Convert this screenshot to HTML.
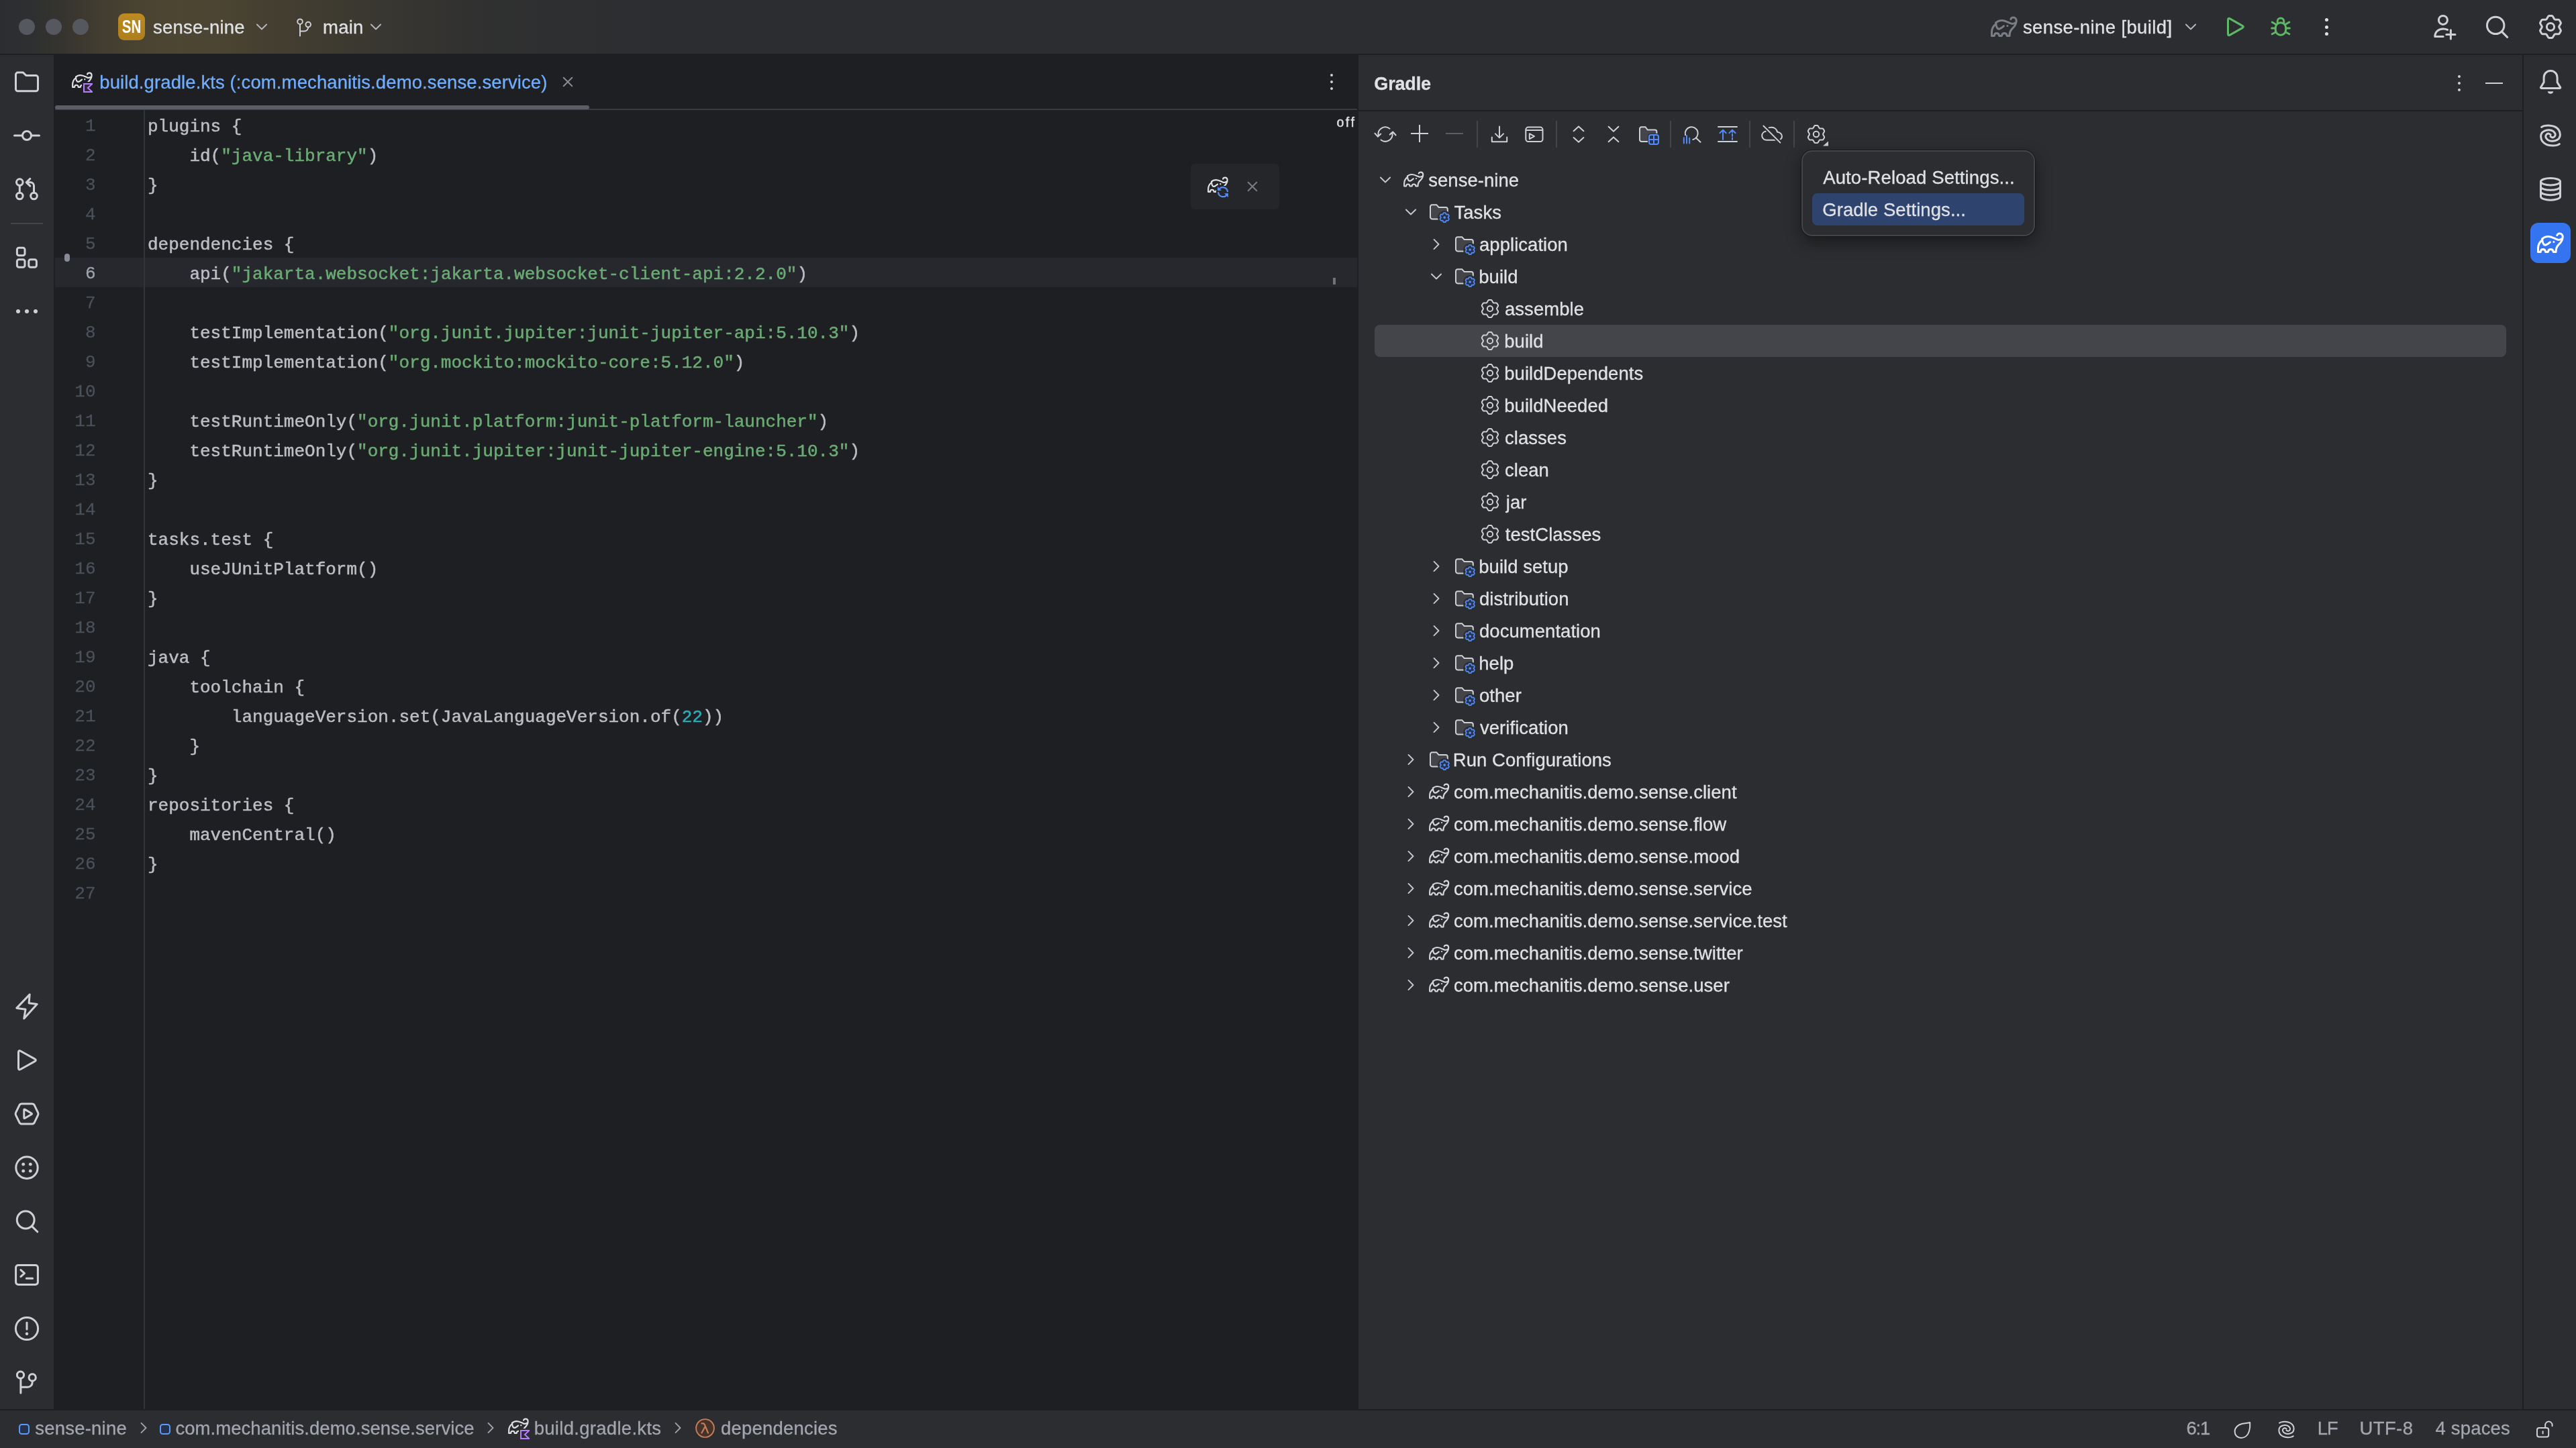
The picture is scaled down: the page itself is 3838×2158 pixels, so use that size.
<!DOCTYPE html><html><head><meta charset="utf-8"><title>sense-nine</title><style>
*{margin:0;padding:0;box-sizing:border-box}
html,body{width:3838px;height:2158px;overflow:hidden;background:#1E1F22;}
body{position:relative;will-change:transform;font-family:"Liberation Sans",sans-serif;font-size:27.5px;letter-spacing:.1px;-webkit-text-stroke:.3px;color:#DFE1E5;}
.a{position:absolute}
.t{position:absolute;white-space:pre;line-height:40px;height:40px}
svg{position:absolute;overflow:visible}
.code{-webkit-text-stroke:.5px;position:absolute;left:220px;white-space:pre;font-family:"Liberation Mono",monospace;font-size:26px;letter-spacing:0;line-height:44px;height:44px;color:#BCBEC4}
.ln{position:absolute;left:82px;width:60.5px;text-align:right;font-family:"Liberation Mono",monospace;font-size:26px;letter-spacing:0;line-height:44px;height:44px;color:#4B5059}
.s{color:#6AAB73} .n{color:#2AACB8}
.st{color:#A8ADBD}
</style></head><body><div class="a" style="left:0;top:0;width:3838px;height:80px;background:linear-gradient(90deg,#2B2D30 0px,#2E2F30 50px,#37352F 100px,#423D30 150px,#4A4331 210px,#4D4632 270px,#4B4432 330px,#453F31 400px,#3D3A30 505px,#363530 605px,#313130 705px,#2E2F30 807px,#2C2E30 908px,#2B2D30 1000px)"></div>
<div class="a" style="left:0px;top:82px;width:80px;height:2018px;background:#2B2D30;"></div>
<div class="a" style="left:2024px;top:82px;width:1734px;height:2018px;background:#2B2D30;"></div>
<div class="a" style="left:3760px;top:82px;width:78px;height:2018px;background:#2B2D30;"></div>
<div class="a" style="left:0px;top:2102px;width:3838px;height:56px;background:#2B2D30;"></div>
<div class="a" style="left:82px;top:162px;width:1940px;height:2px;background:#393B40;"></div>
<div class="a" style="left:2024px;top:164px;width:1734px;height:2px;background:#1E1F22;"></div>
<div class="a" style="left:82px;top:157px;width:796px;height:6px;background:#5A5D63;border-radius:3px"></div>
<div class="a" style="left:214px;top:164px;width:2px;height:1936px;background:#313438;"></div>
<div class="a" style="left:82px;top:384px;width:1940px;height:44px;background:#26282E;"></div>
<div class="a" style="left:214px;top:384px;width:2px;height:44px;background:#313438;"></div>
<div class="a" style="left:96px;top:378px;width:8px;height:12px;background:#878B95;border-radius:4px"></div>
<div class="a" style="left:1986px;top:414px;width:4px;height:10px;background:#6F737A;"></div>
<div class="a" style="left:28px;top:28px;width:24px;height:24px;background:#56585F;border-radius:12px"></div>
<div class="a" style="left:68px;top:28px;width:24px;height:24px;background:#56585F;border-radius:12px"></div>
<div class="a" style="left:108px;top:28px;width:24px;height:24px;background:#56585F;border-radius:12px"></div>
<div class="a" style="left:176px;top:20px;width:40px;height:40px;border-radius:9px;background:linear-gradient(180deg,#BD8B22,#AE7E1C)"></div>
<div class="t" style="left:176px;top:20px;width:40px;text-align:center;font-size:27px;font-weight:bold;letter-spacing:0;line-height:41px;color:#fff;-webkit-text-stroke:0;transform:scaleX(.76)">SN</div>
<div class="t" style="left:228.05px;top:20.87px;letter-spacing:0.228px;">sense-nine</div>
<svg style="left:380px;top:30.299999999999997px" width="20" height="20" viewBox="0 0 20 20" fill="none"><path d="M2.9 6.5L10 13.5L17.1 6.5" stroke="#B4B8BF" stroke-width="1.9" stroke-linecap="round" stroke-linejoin="round"/></svg>
<svg style="left:437.0px;top:24.0px;" width="32" height="32" viewBox="0 0 16 16" fill="none"><circle cx="5" cy="4.1" r="1.9" stroke="#CED0D6" stroke-width="1"/><circle cx="11.1" cy="6.3" r="1.9" stroke="#CED0D6" stroke-width="1"/><path d="M5 6V14.75M5 11.3H8.1C9.8 11.3 11.1 10 11.1 8.3V8.2" stroke="#CED0D6" stroke-width="1" stroke-linecap="round"/></svg>
<div class="t" style="left:481.05px;top:20.87px;letter-spacing:0.233px;">main</div>
<svg style="left:550px;top:30.299999999999997px" width="20" height="20" viewBox="0 0 20 20" fill="none"><path d="M2.9 6.5L10 13.5L17.1 6.5" stroke="#B4B8BF" stroke-width="1.9" stroke-linecap="round" stroke-linejoin="round"/></svg>
<svg style="left:2966.0px;top:20.0px;" width="40" height="40" viewBox="0 0 20 20" fill="none"><path d="M14.9 4.3C15.1 3.5 16 3 16.9 3C18.2 3 19.1 4 19.1 5.5C19.1 8 17.9 9.6 16.2 11.2C14.8 12.5 14 14 14 16.7H12.1C12 15.5 11.2 14.7 10.15 14.7C9.1 14.7 8.3 15.5 8.2 16.7H6.3C6.2 15.5 5.4 14.7 4.35 14.7C3.3 14.7 2.7 15.5 2.65 16.7H0.75V14C0.75 11.6 1.9 9.4 3.7 7.9" stroke="#7A7D84" stroke-width="1.5" stroke-linecap="round" stroke-linejoin="round" /><path d="M3.9 6.9C5 5.8 6.6 5.2 8.3 5.2C10.5 5.2 12.4 6.3 14.3 7.2C15.6 7.8 17 8 18.1 7" stroke="#7A7D84" stroke-width="1.5" stroke-linecap="round" stroke-linejoin="round" /><path d="M3.9 6.9C3.9 8.2 4.1 9.6 4.6 10.5C5 11.3 5.7 11.7 6.5 11.5C7.6 11.2 8.7 10.3 9.7 9.4" stroke="#7A7D84" stroke-width="1.5" stroke-linecap="round" stroke-linejoin="round" /><circle cx="12.45" cy="9.2" r="0.75" fill="#7A7D84"/></svg>
<div class="t" style="left:3013.95px;top:20.87px;letter-spacing:0.388px;">sense-nine [build]</div>
<svg style="left:3254px;top:30.299999999999997px" width="20" height="20" viewBox="0 0 20 20" fill="none"><path d="M2.9 6.5L10 13.5L17.1 6.5" stroke="#B4B8BF" stroke-width="1.9" stroke-linecap="round" stroke-linejoin="round"/></svg>
<svg style="left:3310.0px;top:20.0px;" width="40" height="40" viewBox="0 0 20 20" fill="none"><path d="M4.75 4.76Q4.75 3.10 6.21 3.93L15.44 9.17Q16.90 10.00 15.44 10.83L6.21 16.07Q4.75 16.90 4.75 15.24Z" stroke="#5FB865" stroke-width="1.5" stroke-linecap="round" stroke-linejoin="round" /></svg>
<svg style="left:3378.0px;top:20.0px;" width="40" height="40" viewBox="0 0 20 20" fill="none"><path d="M7.6 6.9V5.85A2.4 2.4 0 0 1 12.4 5.85V6.9" stroke="#5FB865" stroke-width="1.5" stroke-linecap="round" stroke-linejoin="round" /><rect x="6.15" y="6.9" width="7.7" height="9.2" rx="3.85" stroke="#5FB865" stroke-width="1.5"/><path d="M3.3 11H6M14 11H16.7M3.6 6.5L6.4 8.1M16.4 6.5L13.6 8.1M3.6 15.4L6.4 13.9M16.4 15.4L13.6 13.9" stroke="#5FB865" stroke-width="1.5" stroke-linecap="round" stroke-linejoin="round" /></svg>
<div class="a" style="left:3463.5px;top:26.8px;width:5.0px;height:5.0px;background:#DFE1E5;border-radius:2.5px"></div>
<div class="a" style="left:3463.5px;top:37.5px;width:5.0px;height:5.0px;background:#DFE1E5;border-radius:2.5px"></div>
<div class="a" style="left:3463.5px;top:48.2px;width:5.0px;height:5.0px;background:#DFE1E5;border-radius:2.5px"></div>
<svg style="left:3620.0px;top:20.0px;" width="40" height="40" viewBox="0 0 20 20" fill="none"><circle cx="9.95" cy="4.95" r="3.25" stroke="#CED0D6" stroke-width="1.5"/><path d="M13.3 12.2C12.3 11.7 11.2 11.45 10 11.45C6.6 11.45 3.9 13.9 3.9 17.3H10.1" stroke="#CED0D6" stroke-width="1.5" stroke-linecap="round" stroke-linejoin="round" /><path d="M15.7 12.4V19M12.4 15.7H19" stroke="#CED0D6" stroke-width="1.5" stroke-linecap="round" stroke-linejoin="round" /></svg>
<svg style="left:3700.0px;top:20.0px;" width="40" height="40" viewBox="0 0 20 20" fill="none"><circle cx="9.1" cy="8.95" r="6.35" stroke="#CED0D6" stroke-width="1.5"/><path d="M13.8 13.7L17.8 17.7" stroke="#CED0D6" stroke-width="1.5" stroke-linecap="round" stroke-linejoin="round" /></svg>
<svg style="left:3780.0px;top:20.0px;" width="40" height="40" viewBox="0 0 20 20" fill="none"><path d="M8.27 2.26Q8.55 1.78 9.04 1.78L10.96 1.78Q11.45 1.78 11.73 2.26L12.82 4.15Q13.10 4.63 13.66 4.63L15.84 4.63Q16.40 4.63 16.64 5.06L17.60 6.72Q17.85 7.14 17.57 7.63L16.48 9.51Q16.20 10.00 16.48 10.49L17.57 12.37Q17.85 12.86 17.60 13.28L16.64 14.94Q16.40 15.37 15.84 15.37L13.66 15.37Q13.10 15.37 12.82 15.85L11.73 17.74Q11.45 18.22 10.96 18.22L9.04 18.22Q8.55 18.22 8.27 17.74L7.18 15.85Q6.90 15.37 6.34 15.37L4.16 15.37Q3.60 15.37 3.36 14.94L2.40 13.28Q2.15 12.86 2.43 12.37L3.52 10.49Q3.80 10.00 3.52 9.51L2.43 7.63Q2.15 7.14 2.40 6.72L3.36 5.06Q3.60 4.63 4.16 4.63L6.34 4.63Q6.90 4.63 7.18 4.15Z" stroke="#CED0D6" stroke-width="1.5" stroke-linecap="round" stroke-linejoin="round" /><circle cx="10" cy="10" r="2.8" stroke="#CED0D6" stroke-width="1.5"/></svg>
<svg style="left:20.0px;top:102.0px;" width="40" height="40" viewBox="0 0 20 20" fill="none"><path d="M3.25 3.05H7.2L9.55 5.3H16.75A1.5 1.5 0 0 1 18.25 6.8V15.35A1.5 1.5 0 0 1 16.75 16.85H3.25A1.5 1.5 0 0 1 1.75 15.35V4.55A1.5 1.5 0 0 1 3.25 3.05Z" stroke="#CED0D6" stroke-width="1.5" stroke-linecap="round" stroke-linejoin="round" /></svg>
<svg style="left:20.0px;top:182.0px;" width="40" height="40" viewBox="0 0 20 20" fill="none"><circle cx="10" cy="10" r="3.25" stroke="#CED0D6" stroke-width="1.5"/><path d="M0.75 10H6.6M13.4 10H19.25" stroke="#CED0D6" stroke-width="1.5" stroke-linecap="round" stroke-linejoin="round" /></svg>
<svg style="left:20.0px;top:262.0px;" width="40" height="40" viewBox="0 0 20 20" fill="none"><circle cx="4.65" cy="4.8" r="2.4" stroke="#CED0D6" stroke-width="1.5"/><circle cx="4.65" cy="15" r="2.4" stroke="#CED0D6" stroke-width="1.5"/><circle cx="15.25" cy="15" r="2.4" stroke="#CED0D6" stroke-width="1.5"/><path d="M4.65 7.2V12.6M15.25 12.6V7.4A2.5 2.5 0 0 0 12.75 4.9H9.9M12.4 2.2L9.6 4.9L12.4 7.6" stroke="#CED0D6" stroke-width="1.5" stroke-linecap="round" stroke-linejoin="round" /></svg>
<div class="a" style="left:16px;top:332px;width:48px;height:2px;background:#43454A;"></div>
<svg style="left:20.0px;top:364.0px;" width="40" height="40" viewBox="0 0 20 20" fill="none"><rect x="2.7" y="2.65" width="5.8" height="5.7" rx="1.4" stroke="#CED0D6" stroke-width="1.5"/><rect x="2.7" y="11.4" width="5.8" height="5.7" rx="1.4" stroke="#CED0D6" stroke-width="1.5"/><rect x="11.4" y="11.4" width="5.8" height="5.7" rx="1.4" stroke="#CED0D6" stroke-width="1.5"/></svg>
<div class="a" style="left:23.8px;top:460.8px;width:6.4px;height:6.4px;background:#CED0D6;border-radius:3.2px"></div>
<div class="a" style="left:36.8px;top:460.8px;width:6.4px;height:6.4px;background:#CED0D6;border-radius:3.2px"></div>
<div class="a" style="left:49.8px;top:460.8px;width:6.4px;height:6.4px;background:#CED0D6;border-radius:3.2px"></div>
<svg style="left:20.0px;top:1480.0px;" width="40" height="40" viewBox="0 0 20 20" fill="none"><path d="M12.1 1.05L2.4 11.2L9 12.1L7.9 18.95L17.6 8.25L11.55 7.45Z" stroke="#CED0D6" stroke-width="1.5" stroke-linecap="round" stroke-linejoin="round" /></svg>
<svg style="left:20.0px;top:1560.0px;" width="40" height="40" viewBox="0 0 20 20" fill="none"><path d="M3.75 4.15Q3.75 2.30 5.40 3.22L15.85 9.08Q17.50 10.00 15.85 10.92L5.40 16.78Q3.75 17.70 3.75 15.85Z" stroke="#CED0D6" stroke-width="1.5" stroke-linecap="round" stroke-linejoin="round" /></svg>
<svg style="left:20.0px;top:1640.0px;" width="40" height="40" viewBox="0 0 20 20" fill="none"><path d="M1.78 10.97Q1.30 10.00 1.78 9.03L4.52 3.48Q5.00 2.50 6.31 2.50L13.79 2.50Q15.10 2.50 15.57 3.48L18.28 9.03Q18.75 10.00 18.28 10.97L15.57 16.52Q15.10 17.50 13.79 17.50L6.31 17.50Q5.00 17.50 4.52 16.52Z" stroke="#CED0D6" stroke-width="1.5" stroke-linecap="round" stroke-linejoin="round" /><path d="M7.90 7.08Q7.90 6.35 8.52 6.71L13.48 9.63Q14.10 10.00 13.48 10.37L8.52 13.29Q7.90 13.65 7.90 12.92Z" stroke="#CED0D6" stroke-width="1.5" stroke-linecap="round" stroke-linejoin="round" /></svg>
<svg style="left:20.0px;top:1720.0px;" width="40" height="40" viewBox="0 0 20 20" fill="none"><circle cx="10" cy="10.1" r="8.1" stroke="#CED0D6" stroke-width="1.5"/><circle cx="7.35" cy="7.6" r="1.2" fill="#CED0D6"/><circle cx="7.35" cy="12.6" r="1.2" fill="#CED0D6"/><circle cx="12.65" cy="7.6" r="1.2" fill="#CED0D6"/><circle cx="12.65" cy="12.6" r="1.2" fill="#CED0D6"/></svg>
<svg style="left:20.0px;top:1800.0px;" width="40" height="40" viewBox="0 0 20 20" fill="none"><circle cx="9.1" cy="9" r="6.45" stroke="#CED0D6" stroke-width="1.5"/><path d="M13.8 13.8L17.9 17.9" stroke="#CED0D6" stroke-width="1.5" stroke-linecap="round" stroke-linejoin="round" /></svg>
<svg style="left:20.0px;top:1880.0px;" width="40" height="40" viewBox="0 0 20 20" fill="none"><rect x="1.8" y="2.7" width="16.4" height="14.5" rx="1.8" stroke="#CED0D6" stroke-width="1.5"/><path d="M5.45 6.35L8.25 8.8L5.45 11.3M9.65 12.65H14.3" stroke="#CED0D6" stroke-width="1.5" stroke-linecap="round" stroke-linejoin="round" /></svg>
<svg style="left:20.0px;top:1960.0px;" width="40" height="40" viewBox="0 0 20 20" fill="none"><circle cx="10" cy="10" r="8.3" stroke="#CED0D6" stroke-width="1.5"/><path d="M10 5.6V10.5" stroke="#CED0D6" stroke-width="1.5" stroke-linecap="round" stroke-linejoin="round" /><circle cx="10" cy="13.85" r="1.1" fill="#CED0D6"/></svg>
<svg style="left:20.0px;top:2040.0px;" width="40" height="40" viewBox="0 0 20 20" fill="none"><circle cx="5.25" cy="4.6" r="2.55" stroke="#CED0D6" stroke-width="1.5"/><circle cx="14.1" cy="6.45" r="2.55" stroke="#CED0D6" stroke-width="1.5"/><path d="M5.45 7.3V18.05M5.45 13.6H10.6C12.5 13.6 14.1 12.1 14.1 10.1V9.1" stroke="#CED0D6" stroke-width="1.5" stroke-linecap="round" stroke-linejoin="round" /></svg>
<svg style="left:3780.0px;top:102.0px;" width="40" height="40" viewBox="0 0 20 20" fill="none"><path d="M5.05 10.3V6.75A5 5 0 0 1 15.05 6.75V10.3L17.35 14.1C17.5 14.4 17.3 14.7 17 14.7H3.1C2.8 14.7 2.6 14.4 2.75 14.1Z" stroke="#CED0D6" stroke-width="1.5" stroke-linecap="round" stroke-linejoin="round" /><path d="M7.9 17.1H12.1C12.1 18.1 11.2 18.9 10 18.9C8.8 18.9 7.9 18.1 7.9 17.1Z" fill="#CED0D6" /></svg>
<svg style="left:3780.0px;top:182.0px;" width="40" height="40" viewBox="0 0 20 20" fill="none"><path d="M3.35 3.70C3.67 3.55 4.36 3.03 5.25 2.83C6.14 2.63 7.41 2.40 8.70 2.49C10.00 2.57 11.78 2.80 13.02 3.35C14.26 3.90 15.44 4.79 16.13 5.77C16.82 6.75 17.14 8.16 17.17 9.22C17.20 10.29 16.85 11.41 16.30 12.16C15.76 12.91 14.78 13.38 13.89 13.71C12.99 14.04 11.90 14.20 10.95 14.15C10.00 14.09 8.91 13.79 8.19 13.37C7.47 12.95 6.92 12.16 6.63 11.64C6.34 11.12 6.37 10.69 6.46 10.26C6.55 9.83 6.80 9.34 7.15 9.05C7.50 8.76 8.06 8.49 8.53 8.53C9.01 8.58 9.76 9.18 10.00 9.31" stroke="#CED0D6" stroke-width="1.5" stroke-linecap="round" stroke-linejoin="round" /><path d="M16.65 16.30C16.33 16.45 15.64 16.97 14.75 17.17C13.86 17.37 12.59 17.60 11.30 17.51C10.00 17.43 8.22 17.20 6.98 16.65C5.74 16.10 4.56 15.21 3.87 14.23C3.18 13.25 2.86 11.84 2.83 10.78C2.80 9.71 3.15 8.59 3.70 7.84C4.24 7.09 5.22 6.62 6.11 6.29C7.01 5.96 8.10 5.80 9.05 5.85C10.00 5.91 11.09 6.21 11.81 6.63C12.53 7.05 13.08 7.84 13.37 8.36C13.66 8.88 13.63 9.31 13.54 9.74C13.45 10.17 13.20 10.66 12.85 10.95C12.50 11.24 11.94 11.51 11.47 11.47C10.99 11.42 10.24 10.82 10.00 10.69" stroke="#CED0D6" stroke-width="1.5" stroke-linecap="round" stroke-linejoin="round" /></svg>
<svg style="left:3780.0px;top:262.0px;" width="40" height="40" viewBox="0 0 20 20" fill="none"><ellipse cx="10" cy="4.35" rx="7.25" ry="2.6" stroke="#CED0D6" stroke-width="1.5"/><path d="M2.75 4.35V15.5C2.75 16.95 6 18.1 10 18.1C14 18.1 17.25 16.95 17.25 15.5V4.35M2.75 8.1C2.75 9.5 6 10.65 10 10.65C14 10.65 17.25 9.5 17.25 8.1M2.75 11.8C2.75 13.2 6 14.35 10 14.35C14 14.35 17.25 13.2 17.25 11.8" stroke="#CED0D6" stroke-width="1.5" stroke-linecap="round" stroke-linejoin="round" /></svg>
<div class="a" style="left:3770px;top:332px;width:60px;height:60px;background:#3574F0;border-radius:12px"></div>
<svg style="left:3780.0px;top:342.0px;" width="40" height="40" viewBox="0 0 20 20" fill="none"><path d="M14.9 4.3C15.1 3.5 16 3 16.9 3C18.2 3 19.1 4 19.1 5.5C19.1 8 17.9 9.6 16.2 11.2C14.8 12.5 14 14 14 16.7H12.1C12 15.5 11.2 14.7 10.15 14.7C9.1 14.7 8.3 15.5 8.2 16.7H6.3C6.2 15.5 5.4 14.7 4.35 14.7C3.3 14.7 2.7 15.5 2.65 16.7H0.75V14C0.75 11.6 1.9 9.4 3.7 7.9" stroke="#FFFFFF" stroke-width="1.5" stroke-linecap="round" stroke-linejoin="round" /><path d="M3.9 6.9C5 5.8 6.6 5.2 8.3 5.2C10.5 5.2 12.4 6.3 14.3 7.2C15.6 7.8 17 8 18.1 7" stroke="#FFFFFF" stroke-width="1.5" stroke-linecap="round" stroke-linejoin="round" /><path d="M3.9 6.9C3.9 8.2 4.1 9.6 4.6 10.5C5 11.3 5.7 11.7 6.5 11.5C7.6 11.2 8.7 10.3 9.7 9.4" stroke="#FFFFFF" stroke-width="1.5" stroke-linecap="round" stroke-linejoin="round" /><circle cx="12.45" cy="9.2" r="0.75" fill="#FFFFFF"/></svg>
<svg style="left:106.6px;top:103.8px" width="31" height="31" viewBox="0 0 20 20" fill="none"><path d="M14.9 4.3C15.1 3.5 16 3 16.9 3C18.2 3 19.1 4 19.1 5.5C19.1 8 17.9 9.6 16.2 11.2C14.8 12.5 14 14 14 16.7H12.1C12 15.5 11.2 14.7 10.15 14.7C9.1 14.7 8.3 15.5 8.2 16.7H6.3C6.2 15.5 5.4 14.7 4.35 14.7C3.3 14.7 2.7 15.5 2.65 16.7H0.75V14C0.75 11.6 1.9 9.4 3.7 7.9" stroke="#DFE1E5" stroke-width="1.4" stroke-linecap="round" stroke-linejoin="round" /><path d="M3.9 6.9C5 5.8 6.6 5.2 8.3 5.2C10.5 5.2 12.4 6.3 14.3 7.2C15.6 7.8 17 8 18.1 7" stroke="#DFE1E5" stroke-width="1.4" stroke-linecap="round" stroke-linejoin="round" /><path d="M3.9 6.9C3.9 8.2 4.1 9.6 4.6 10.5C5 11.3 5.7 11.7 6.5 11.5C7.6 11.2 8.7 10.3 9.7 9.4" stroke="#DFE1E5" stroke-width="1.4" stroke-linecap="round" stroke-linejoin="round" /><circle cx="12.45" cy="9.2" r="0.75" fill="#DFE1E5"/></svg>
<div class="a" style="left:122.0px;top:122.0px;width:18px;height:18px;background:#1E1F22;"></div>
<svg style="left:124.0px;top:124.0px;overflow:hidden" width="14" height="14" viewBox="0 0 14 14" fill="none"><path d="M1 1H13.4L6.9 7L13.4 13H1Z" fill="#2F2936" stroke="#B57EFB" stroke-width="2" stroke-linejoin="miter"/></svg>
<div class="t" style="left:148.25px;top:103.07px;letter-spacing:0.103px;color:#70AEFF;">build.gradle.kts (:com.mechanitis.demo.sense.service)</div>
<svg style="left:839px;top:115px" width="14" height="14" viewBox="0 0 14 14" fill="none"><path d="M0.7 0.7L13.3 13.3M13.3 0.7L0.7 13.3" stroke="#868A91" stroke-width="2" stroke-linecap="round"/></svg>
<div class="a" style="left:1981.6px;top:109.5px;width:4.8px;height:4.8px;background:#CED0D6;border-radius:2.4px"></div>
<div class="a" style="left:1981.6px;top:119.6px;width:4.8px;height:4.8px;background:#CED0D6;border-radius:2.4px"></div>
<div class="a" style="left:1981.6px;top:129.7px;width:4.8px;height:4.8px;background:#CED0D6;border-radius:2.4px"></div>
<div class="t" style="left:1991.5px;top:162px;font-size:19.5px;letter-spacing:2.5px;-webkit-text-stroke:.4px;color:#DFE1E5">off</div>
<div class="a" style="left:1774px;top:244px;width:132px;height:68px;background:#25262A;border-radius:6px"></div>
<svg style="left:1799.0px;top:260.0px;" width="31" height="31" viewBox="0 0 20 20" fill="none"><path d="M14.9 4.3C15.1 3.5 16 3 16.9 3C18.2 3 19.1 4 19.1 5.5C19.1 8 17.9 9.6 16.2 11.2C14.8 12.5 14 14 14 16.7H12.1C12 15.5 11.2 14.7 10.15 14.7C9.1 14.7 8.3 15.5 8.2 16.7H6.3C6.2 15.5 5.4 14.7 4.35 14.7C3.3 14.7 2.7 15.5 2.65 16.7H0.75V14C0.75 11.6 1.9 9.4 3.7 7.9" stroke="#DFE1E5" stroke-width="1.4" stroke-linecap="round" stroke-linejoin="round" /><path d="M3.9 6.9C5 5.8 6.6 5.2 8.3 5.2C10.5 5.2 12.4 6.3 14.3 7.2C15.6 7.8 17 8 18.1 7" stroke="#DFE1E5" stroke-width="1.4" stroke-linecap="round" stroke-linejoin="round" /><path d="M3.9 6.9C3.9 8.2 4.1 9.6 4.6 10.5C5 11.3 5.7 11.7 6.5 11.5C7.6 11.2 8.7 10.3 9.7 9.4" stroke="#DFE1E5" stroke-width="1.4" stroke-linecap="round" stroke-linejoin="round" /><circle cx="12.45" cy="9.2" r="0.75" fill="#DFE1E5"/></svg>
<div class="a" style="left:1812px;top:277px;width:20px;height:19px;background:#25262A;"></div>
<svg style="left:1813px;top:277px" width="18" height="18" viewBox="0 0 18 18" fill="none"><path d="M2.76 6.26A6.96 6.96 0 0 1 15.96 8.23" stroke="#548AF7" stroke-width="2.3" stroke-linecap="round" stroke-linejoin="round" stroke-linecap="butt"/><path d="M1 1V7H7Z" fill="#548AF7" /><path d="M15.38 12.14A6.96 6.96 0 0 1 2.18 10.17" stroke="#548AF7" stroke-width="2.3" stroke-linecap="round" stroke-linejoin="round" stroke-linecap="butt"/><path d="M17 17.3V11.3H11Z" fill="#548AF7" /></svg>
<svg style="left:1859px;top:271px" width="14" height="14" viewBox="0 0 14 14" fill="none"><path d="M0.7 0.7L13.3 13.3M13.3 0.7L0.7 13.3" stroke="#7A7D84" stroke-width="2" stroke-linecap="round"/></svg>
<div class="ln" style="top:166px">1</div>
<div class="code" style="top:166.6px">plugins {</div>
<div class="ln" style="top:210px">2</div>
<div class="code" style="top:210.6px">    id(<span class="s">"java-library"</span>)</div>
<div class="ln" style="top:254px">3</div>
<div class="code" style="top:254.6px">}</div>
<div class="ln" style="top:298px">4</div>
<div class="ln" style="top:342px">5</div>
<div class="code" style="top:342.6px">dependencies {</div>
<div class="ln" style="top:386px;color:#A1A3AB">6</div>
<div class="code" style="top:386.6px">    api(<span class="s">"jakarta.websocket:jakarta.websocket-client-api:2.2.0"</span>)</div>
<div class="ln" style="top:430px">7</div>
<div class="ln" style="top:474px">8</div>
<div class="code" style="top:474.6px">    testImplementation(<span class="s">"org.junit.jupiter:junit-jupiter-api:5.10.3"</span>)</div>
<div class="ln" style="top:518px">9</div>
<div class="code" style="top:518.6px">    testImplementation(<span class="s">"org.mockito:mockito-core:5.12.0"</span>)</div>
<div class="ln" style="top:562px">10</div>
<div class="ln" style="top:606px">11</div>
<div class="code" style="top:606.6px">    testRuntimeOnly(<span class="s">"org.junit.platform:junit-platform-launcher"</span>)</div>
<div class="ln" style="top:650px">12</div>
<div class="code" style="top:650.6px">    testRuntimeOnly(<span class="s">"org.junit.jupiter:junit-jupiter-engine:5.10.3"</span>)</div>
<div class="ln" style="top:694px">13</div>
<div class="code" style="top:694.6px">}</div>
<div class="ln" style="top:738px">14</div>
<div class="ln" style="top:782px">15</div>
<div class="code" style="top:782.6px">tasks.test {</div>
<div class="ln" style="top:826px">16</div>
<div class="code" style="top:826.6px">    useJUnitPlatform()</div>
<div class="ln" style="top:870px">17</div>
<div class="code" style="top:870.6px">}</div>
<div class="ln" style="top:914px">18</div>
<div class="ln" style="top:958px">19</div>
<div class="code" style="top:958.6px">java {</div>
<div class="ln" style="top:1002px">20</div>
<div class="code" style="top:1002.6px">    toolchain {</div>
<div class="ln" style="top:1046px">21</div>
<div class="code" style="top:1046.6px">        languageVersion.set(JavaLanguageVersion.of(<span class="n">22</span>))</div>
<div class="ln" style="top:1090px">22</div>
<div class="code" style="top:1090.6px">    }</div>
<div class="ln" style="top:1134px">23</div>
<div class="code" style="top:1134.6px">}</div>
<div class="ln" style="top:1178px">24</div>
<div class="code" style="top:1178.6px">repositories {</div>
<div class="ln" style="top:1222px">25</div>
<div class="code" style="top:1222.6px">    mavenCentral()</div>
<div class="ln" style="top:1266px">26</div>
<div class="code" style="top:1266.6px">}</div>
<div class="ln" style="top:1310px">27</div>
<div class="t" style="left:2047.30px;top:105.04px;letter-spacing:-0.170px;font-size:27px;font-weight:bold;">Gradle</div>
<div class="a" style="left:3661.7px;top:111.7px;width:4.6px;height:4.6px;background:#CED0D6;border-radius:2.3px"></div>
<div class="a" style="left:3661.7px;top:121.7px;width:4.6px;height:4.6px;background:#CED0D6;border-radius:2.3px"></div>
<div class="a" style="left:3661.7px;top:131.7px;width:4.6px;height:4.6px;background:#CED0D6;border-radius:2.3px"></div>
<div class="a" style="left:3703px;top:123px;width:26px;height:2px;background:#CED0D6;"></div>
<svg style="left:2048.0px;top:184.0px;" width="32" height="32" viewBox="0 0 16 16" fill="none"><path d="M2.4 9.85L2.75 8.79A5.3 5.3 0 0 1 11.26 3.87M0.2 7.35L2.4 9.85L4.65 7.8" stroke="#CED0D6" stroke-width="1" stroke-linecap="round" stroke-linejoin="round" /><path d="M13.6 6.25L13.25 7.31A5.3 5.3 0 0 1 4.74 12.23M15.8 8.75L13.6 6.25L11.35 8.3" stroke="#CED0D6" stroke-width="1" stroke-linecap="round" stroke-linejoin="round" /></svg>
<div class="a" style="left:2102px;top:198px;width:26px;height:2px;background:#CED0D6;"></div>
<div class="a" style="left:2114px;top:186px;width:2px;height:26px;background:#CED0D6;"></div>
<div class="a" style="left:2154px;top:198px;width:26px;height:2px;background:#5A5D63;"></div>
<div class="a" style="left:2200px;top:180px;width:2px;height:40px;background:#43454A;"></div>
<div class="a" style="left:2318px;top:180px;width:2px;height:40px;background:#43454A;"></div>
<div class="a" style="left:2488px;top:180px;width:2px;height:40px;background:#43454A;"></div>
<div class="a" style="left:2606px;top:180px;width:2px;height:40px;background:#43454A;"></div>
<div class="a" style="left:2672px;top:180px;width:2px;height:40px;background:#43454A;"></div>
<svg style="left:2218.0px;top:184.0px;" width="32" height="32" viewBox="0 0 16 16" fill="none"><path d="M8 2.25V10.6M5 7.7L8 10.7L11 7.7" stroke="#CED0D6" stroke-width="1" stroke-linecap="round" stroke-linejoin="round" /><path d="M2.4 10.2V13.6H13.6V10.2" stroke="#CED0D6" stroke-width="1" stroke-linecap="round" stroke-linejoin="round" stroke-linecap="butt" stroke-linejoin="miter"/></svg>
<svg style="left:2270.0px;top:184.0px;" width="32" height="32" viewBox="0 0 16 16" fill="none"><rect x="1.65" y="2.75" width="12.6" height="10.8" rx="1.9" stroke="#CED0D6" stroke-width="1"/><path d="M1.8 5.05H14.1" stroke="#CED0D6" stroke-width="1" stroke-linecap="round" stroke-linejoin="round" /><path d="M4.4 7.6L8 9.55L4.4 11.55Z" stroke="#CED0D6" stroke-width="1" stroke-linecap="round" stroke-linejoin="round" /></svg>
<svg style="left:2336.0px;top:184.0px;" width="32" height="32" viewBox="0 0 16 16" fill="none"><path d="M4.3 5.6L8 2.2L11.7 5.6M4.3 10.5L8 13.9L11.7 10.5" stroke="#CED0D6" stroke-width="1" stroke-linecap="round" stroke-linejoin="round" /></svg>
<svg style="left:2388.0px;top:184.0px;" width="32" height="32" viewBox="0 0 16 16" fill="none"><path d="M4.3 2.4L8 5.9L11.7 2.4M4.3 13.6L8 10.2L11.7 13.6" stroke="#CED0D6" stroke-width="1" stroke-linecap="round" stroke-linejoin="round" /></svg>
<svg style="left:2440.0px;top:184.0px;" width="32" height="32" viewBox="0 0 16 16" fill="none"><path d="M2.9 2.6H5.7L7.4 4.8H12.8A1.4 1.4 0 0 1 14.2 6.2V12.1A1.4 1.4 0 0 1 12.8 13.5H2.9A1.4 1.4 0 0 1 1.5 12.1V4A1.4 1.4 0 0 1 2.9 2.6Z" fill="#43454A" stroke="#CED0D6" stroke-width="1"/><rect x="7.5" y="7.5" width="9" height="9" rx="2" fill="#2B2D30"/><rect x="8.5" y="8.5" width="7" height="7" rx="1.5" fill="#25324D" stroke="#548AF7" stroke-width="1"/><path d="M12 8.5V15.5M8.5 12H15.5" stroke="#548AF7" stroke-width="1" stroke-linecap="round" stroke-linejoin="round" /></svg>
<svg style="left:2506.0px;top:184.0px;" width="32" height="32" viewBox="0 0 16 16" fill="none"><path d="M2.51 8.6A4.75 4.75 0 1 1 8.17 12" stroke="#CED0D6" stroke-width="1" stroke-linecap="round" stroke-linejoin="round" /><path d="M10.46 10.76L13.75 13.85" stroke="#CED0D6" stroke-width="1" stroke-linecap="round" stroke-linejoin="round" /><path d="M1.4 10.6V14.8M3.5 9V14.8M5.6 10.9V14.8" stroke="#548AF7" stroke-width="1" stroke-linecap="round" stroke-linejoin="round" stroke-linecap="butt"/></svg>
<svg style="left:2558.0px;top:184.0px;" width="32" height="32" viewBox="0 0 16 16" fill="none"><path d="M1 2.45H15M1 13.45H15" stroke="#CED0D6" stroke-width="1" stroke-linecap="round" stroke-linejoin="round" stroke-linecap="butt"/><path d="M4.5 12V4.9M2.2 7.1L4.5 4.8L6.8 7.1" stroke="#548AF7" stroke-width="1" stroke-linecap="round" stroke-linejoin="round" /><path d="M9.2 7.1L11.5 4.8L13.8 7.1" stroke="#548AF7" stroke-width="1" stroke-linecap="round" stroke-linejoin="round" /><path d="M11.5 5V12" stroke="#548AF7" stroke-width="1" stroke-linecap="round" stroke-linejoin="round" stroke-dasharray="1.6 1.3" stroke-linecap="butt"/></svg>
<svg style="left:2624.0px;top:184.0px;" width="32" height="32" viewBox="0 0 16 16" fill="none"><path d="M4.1 12.4C2.1 12.4 0.6 10.9 0.6 9.1C0.6 7.4 1.9 6.1 3.5 5.9C4 4.1 5.7 2.85 7.7 2.85C9.9 2.85 11.6 4.4 12 6.4C13.9 6.5 15.5 7.8 15.5 9.6C15.5 11.2 14.1 12.4 12.4 12.4Z" stroke="#CED0D6" stroke-width="1" stroke-linecap="round" stroke-linejoin="round" /><path d="M1.2 1.2L14.6 14.6" stroke="#2B2D30" stroke-width="3"/><path d="M1.7 1.8L14.2 14.3" stroke="#CED0D6" stroke-width="1" stroke-linecap="round" stroke-linejoin="round" /></svg>
<svg style="left:2690.0px;top:184.0px;" width="32" height="32" viewBox="0 0 16 16" fill="none"><path d="M6.63 1.88Q6.85 1.50 7.24 1.50L8.76 1.50Q9.15 1.50 9.37 1.88L10.23 3.37Q10.45 3.76 10.89 3.76L12.61 3.76Q13.06 3.76 13.25 4.10L14.01 5.41Q14.20 5.74 13.98 6.13L13.12 7.62Q12.90 8.00 13.12 8.38L13.98 9.87Q14.20 10.26 14.01 10.59L13.25 11.90Q13.06 12.24 12.61 12.24L10.89 12.24Q10.45 12.24 10.23 12.63L9.37 14.12Q9.15 14.50 8.76 14.50L7.24 14.50Q6.85 14.50 6.63 14.12L5.77 12.63Q5.55 12.24 5.11 12.24L3.39 12.24Q2.94 12.24 2.75 11.90L1.99 10.59Q1.80 10.26 2.02 9.87L2.88 8.38Q3.10 8.00 2.88 7.62L2.02 6.13Q1.80 5.74 1.99 5.41L2.75 4.10Q2.94 3.76 3.39 3.76L5.11 3.76Q5.55 3.76 5.77 3.37Z" stroke="#CED0D6" stroke-width="1" stroke-linecap="round" stroke-linejoin="round" /><circle cx="8" cy="8" r="2.1" stroke="#CED0D6" stroke-width="1"/></svg>
<svg style="left:2716px;top:210px" width="8" height="8" viewBox="0 0 8 8"><path d="M0 7.5H8V0.5Z" fill="#CED0D6"/></svg>
<div class="a" style="left:2048px;top:484px;width:1686px;height:48px;background:#43454A;border-radius:8px"></div>
<svg style="left:2054px;top:258.3px" width="20" height="20" viewBox="0 0 20 20" fill="none"><path d="M2.9 6.5L10 13.5L17.1 6.5" stroke="#C6C9CF" stroke-width="1.9" stroke-linecap="round" stroke-linejoin="round"/></svg>
<svg style="left:2090.7px;top:252.3px;" width="30.6" height="30.6" viewBox="0 0 20 20" fill="none"><path d="M14.9 4.3C15.1 3.5 16 3 16.9 3C18.2 3 19.1 4 19.1 5.5C19.1 8 17.9 9.6 16.2 11.2C14.8 12.5 14 14 14 16.7H12.1C12 15.5 11.2 14.7 10.15 14.7C9.1 14.7 8.3 15.5 8.2 16.7H6.3C6.2 15.5 5.4 14.7 4.35 14.7C3.3 14.7 2.7 15.5 2.65 16.7H0.75V14C0.75 11.6 1.9 9.4 3.7 7.9" stroke="#D6D8DD" stroke-width="1.4" stroke-linecap="round" stroke-linejoin="round" /><path d="M3.9 6.9C5 5.8 6.6 5.2 8.3 5.2C10.5 5.2 12.4 6.3 14.3 7.2C15.6 7.8 17 8 18.1 7" stroke="#D6D8DD" stroke-width="1.4" stroke-linecap="round" stroke-linejoin="round" /><path d="M3.9 6.9C3.9 8.2 4.1 9.6 4.6 10.5C5 11.3 5.7 11.7 6.5 11.5C7.6 11.2 8.7 10.3 9.7 9.4" stroke="#D6D8DD" stroke-width="1.4" stroke-linecap="round" stroke-linejoin="round" /><circle cx="12.45" cy="9.2" r="0.75" fill="#D6D8DD"/></svg>
<div class="t" style="left:2128.25px;top:248.87px;letter-spacing:0.040px;">sense-nine</div>
<svg style="left:2092px;top:306.3px" width="20" height="20" viewBox="0 0 20 20" fill="none"><path d="M2.9 6.5L10 13.5L17.1 6.5" stroke="#C6C9CF" stroke-width="1.9" stroke-linecap="round" stroke-linejoin="round"/></svg>
<svg style="left:2128.0px;top:300.0px;" width="32" height="32" viewBox="0 0 16 16" fill="none"><path d="M2.9 2.6H6.1L7.8 4.5H13A1.4 1.4 0 0 1 14.4 5.9V11.8A1.4 1.4 0 0 1 13 13.2H2.9A1.4 1.4 0 0 1 1.5 11.8V4A1.4 1.4 0 0 1 2.9 2.6Z" fill="#43454A" stroke="#CED0D6" stroke-width="1"/><circle cx="12.1" cy="12.05" r="5.1" fill="#2B2D30"/><path d="M11.31 8.73Q11.41 8.52 11.65 8.52L12.55 8.52Q12.79 8.52 12.89 8.73L13.30 9.58Q13.40 9.80 13.64 9.78L14.58 9.71Q14.82 9.69 14.93 9.89L15.39 10.68Q15.50 10.88 15.37 11.08L14.84 11.85Q14.70 12.05 14.84 12.25L15.37 13.02Q15.50 13.22 15.39 13.42L14.93 14.21Q14.82 14.41 14.58 14.39L13.64 14.32Q13.40 14.30 13.30 14.52L12.89 15.37Q12.79 15.58 12.55 15.58L11.65 15.58Q11.41 15.58 11.31 15.37L10.90 14.52Q10.80 14.30 10.56 14.32L9.62 14.39Q9.38 14.41 9.27 14.21L8.81 13.42Q8.70 13.22 8.83 13.02L9.36 12.25Q9.50 12.05 9.36 11.85L8.83 11.08Q8.70 10.88 8.81 10.68L9.27 9.89Q9.38 9.69 9.62 9.71L10.56 9.78Q10.80 9.80 10.90 9.58Z" stroke="#548AF7" stroke-width="0.9" stroke-linecap="round" stroke-linejoin="round" fill="#25324D"/><circle cx="12.1" cy="12.05" r="0.95" fill="#548AF7"/></svg>
<div class="t" style="left:2166.50px;top:296.87px;letter-spacing:0.040px;">Tasks</div>
<svg style="left:2130px;top:354.3px" width="20" height="20" viewBox="0 0 20 20" fill="none"><path d="M6.5 2.9L13.5 10L6.5 17.1" stroke="#C6C9CF" stroke-width="1.9" stroke-linecap="round" stroke-linejoin="round"/></svg>
<svg style="left:2166.0px;top:348.0px;" width="32" height="32" viewBox="0 0 16 16" fill="none"><path d="M2.9 2.6H6.1L7.8 4.5H13A1.4 1.4 0 0 1 14.4 5.9V11.8A1.4 1.4 0 0 1 13 13.2H2.9A1.4 1.4 0 0 1 1.5 11.8V4A1.4 1.4 0 0 1 2.9 2.6Z" fill="#43454A" stroke="#CED0D6" stroke-width="1"/><circle cx="12.1" cy="12.05" r="5.1" fill="#2B2D30"/><path d="M11.31 8.73Q11.41 8.52 11.65 8.52L12.55 8.52Q12.79 8.52 12.89 8.73L13.30 9.58Q13.40 9.80 13.64 9.78L14.58 9.71Q14.82 9.69 14.93 9.89L15.39 10.68Q15.50 10.88 15.37 11.08L14.84 11.85Q14.70 12.05 14.84 12.25L15.37 13.02Q15.50 13.22 15.39 13.42L14.93 14.21Q14.82 14.41 14.58 14.39L13.64 14.32Q13.40 14.30 13.30 14.52L12.89 15.37Q12.79 15.58 12.55 15.58L11.65 15.58Q11.41 15.58 11.31 15.37L10.90 14.52Q10.80 14.30 10.56 14.32L9.62 14.39Q9.38 14.41 9.27 14.21L8.81 13.42Q8.70 13.22 8.83 13.02L9.36 12.25Q9.50 12.05 9.36 11.85L8.83 11.08Q8.70 10.88 8.81 10.68L9.27 9.89Q9.38 9.69 9.62 9.71L10.56 9.78Q10.80 9.80 10.90 9.58Z" stroke="#548AF7" stroke-width="0.9" stroke-linecap="round" stroke-linejoin="round" fill="#25324D"/><circle cx="12.1" cy="12.05" r="0.95" fill="#548AF7"/></svg>
<div class="t" style="left:2204.00px;top:344.87px;letter-spacing:0.040px;">application</div>
<svg style="left:2130px;top:402.3px" width="20" height="20" viewBox="0 0 20 20" fill="none"><path d="M2.9 6.5L10 13.5L17.1 6.5" stroke="#C6C9CF" stroke-width="1.9" stroke-linecap="round" stroke-linejoin="round"/></svg>
<svg style="left:2166.0px;top:396.0px;" width="32" height="32" viewBox="0 0 16 16" fill="none"><path d="M2.9 2.6H6.1L7.8 4.5H13A1.4 1.4 0 0 1 14.4 5.9V11.8A1.4 1.4 0 0 1 13 13.2H2.9A1.4 1.4 0 0 1 1.5 11.8V4A1.4 1.4 0 0 1 2.9 2.6Z" fill="#43454A" stroke="#CED0D6" stroke-width="1"/><circle cx="12.1" cy="12.05" r="5.1" fill="#2B2D30"/><path d="M11.31 8.73Q11.41 8.52 11.65 8.52L12.55 8.52Q12.79 8.52 12.89 8.73L13.30 9.58Q13.40 9.80 13.64 9.78L14.58 9.71Q14.82 9.69 14.93 9.89L15.39 10.68Q15.50 10.88 15.37 11.08L14.84 11.85Q14.70 12.05 14.84 12.25L15.37 13.02Q15.50 13.22 15.39 13.42L14.93 14.21Q14.82 14.41 14.58 14.39L13.64 14.32Q13.40 14.30 13.30 14.52L12.89 15.37Q12.79 15.58 12.55 15.58L11.65 15.58Q11.41 15.58 11.31 15.37L10.90 14.52Q10.80 14.30 10.56 14.32L9.62 14.39Q9.38 14.41 9.27 14.21L8.81 13.42Q8.70 13.22 8.83 13.02L9.36 12.25Q9.50 12.05 9.36 11.85L8.83 11.08Q8.70 10.88 8.81 10.68L9.27 9.89Q9.38 9.69 9.62 9.71L10.56 9.78Q10.80 9.80 10.90 9.58Z" stroke="#548AF7" stroke-width="0.9" stroke-linecap="round" stroke-linejoin="round" fill="#25324D"/><circle cx="12.1" cy="12.05" r="0.95" fill="#548AF7"/></svg>
<div class="t" style="left:2203.25px;top:392.87px;letter-spacing:0.040px;">build</div>
<svg style="left:2204.2px;top:444.0px;" width="32" height="32" viewBox="0 0 16 16" fill="none"><path d="M6.63 1.88Q6.85 1.50 7.24 1.50L8.76 1.50Q9.15 1.50 9.37 1.88L10.23 3.37Q10.45 3.76 10.89 3.76L12.61 3.76Q13.06 3.76 13.25 4.10L14.01 5.41Q14.20 5.74 13.98 6.13L13.12 7.62Q12.90 8.00 13.12 8.38L13.98 9.87Q14.20 10.26 14.01 10.59L13.25 11.90Q13.06 12.24 12.61 12.24L10.89 12.24Q10.45 12.24 10.23 12.63L9.37 14.12Q9.15 14.50 8.76 14.50L7.24 14.50Q6.85 14.50 6.63 14.12L5.77 12.63Q5.55 12.24 5.11 12.24L3.39 12.24Q2.94 12.24 2.75 11.90L1.99 10.59Q1.80 10.26 2.02 9.87L2.88 8.38Q3.10 8.00 2.88 7.62L2.02 6.13Q1.80 5.74 1.99 5.41L2.75 4.10Q2.94 3.76 3.39 3.76L5.11 3.76Q5.55 3.76 5.77 3.37Z" stroke="#CED0D6" stroke-width="1" stroke-linecap="round" stroke-linejoin="round" /><circle cx="8" cy="8" r="2.05" stroke="#CED0D6" stroke-width="1"/></svg>
<div class="t" style="left:2242.00px;top:440.87px;letter-spacing:0.040px;">assemble</div>
<svg style="left:2204.2px;top:492.0px;" width="32" height="32" viewBox="0 0 16 16" fill="none"><path d="M6.63 1.88Q6.85 1.50 7.24 1.50L8.76 1.50Q9.15 1.50 9.37 1.88L10.23 3.37Q10.45 3.76 10.89 3.76L12.61 3.76Q13.06 3.76 13.25 4.10L14.01 5.41Q14.20 5.74 13.98 6.13L13.12 7.62Q12.90 8.00 13.12 8.38L13.98 9.87Q14.20 10.26 14.01 10.59L13.25 11.90Q13.06 12.24 12.61 12.24L10.89 12.24Q10.45 12.24 10.23 12.63L9.37 14.12Q9.15 14.50 8.76 14.50L7.24 14.50Q6.85 14.50 6.63 14.12L5.77 12.63Q5.55 12.24 5.11 12.24L3.39 12.24Q2.94 12.24 2.75 11.90L1.99 10.59Q1.80 10.26 2.02 9.87L2.88 8.38Q3.10 8.00 2.88 7.62L2.02 6.13Q1.80 5.74 1.99 5.41L2.75 4.10Q2.94 3.76 3.39 3.76L5.11 3.76Q5.55 3.76 5.77 3.37Z" stroke="#CED0D6" stroke-width="1" stroke-linecap="round" stroke-linejoin="round" /><circle cx="8" cy="8" r="2.05" stroke="#CED0D6" stroke-width="1"/></svg>
<div class="t" style="left:2241.25px;top:488.87px;letter-spacing:0.040px;">build</div>
<svg style="left:2204.2px;top:540.0px;" width="32" height="32" viewBox="0 0 16 16" fill="none"><path d="M6.63 1.88Q6.85 1.50 7.24 1.50L8.76 1.50Q9.15 1.50 9.37 1.88L10.23 3.37Q10.45 3.76 10.89 3.76L12.61 3.76Q13.06 3.76 13.25 4.10L14.01 5.41Q14.20 5.74 13.98 6.13L13.12 7.62Q12.90 8.00 13.12 8.38L13.98 9.87Q14.20 10.26 14.01 10.59L13.25 11.90Q13.06 12.24 12.61 12.24L10.89 12.24Q10.45 12.24 10.23 12.63L9.37 14.12Q9.15 14.50 8.76 14.50L7.24 14.50Q6.85 14.50 6.63 14.12L5.77 12.63Q5.55 12.24 5.11 12.24L3.39 12.24Q2.94 12.24 2.75 11.90L1.99 10.59Q1.80 10.26 2.02 9.87L2.88 8.38Q3.10 8.00 2.88 7.62L2.02 6.13Q1.80 5.74 1.99 5.41L2.75 4.10Q2.94 3.76 3.39 3.76L5.11 3.76Q5.55 3.76 5.77 3.37Z" stroke="#CED0D6" stroke-width="1" stroke-linecap="round" stroke-linejoin="round" /><circle cx="8" cy="8" r="2.05" stroke="#CED0D6" stroke-width="1"/></svg>
<div class="t" style="left:2241.25px;top:536.87px;letter-spacing:0.040px;">buildDependents</div>
<svg style="left:2204.2px;top:588.0px;" width="32" height="32" viewBox="0 0 16 16" fill="none"><path d="M6.63 1.88Q6.85 1.50 7.24 1.50L8.76 1.50Q9.15 1.50 9.37 1.88L10.23 3.37Q10.45 3.76 10.89 3.76L12.61 3.76Q13.06 3.76 13.25 4.10L14.01 5.41Q14.20 5.74 13.98 6.13L13.12 7.62Q12.90 8.00 13.12 8.38L13.98 9.87Q14.20 10.26 14.01 10.59L13.25 11.90Q13.06 12.24 12.61 12.24L10.89 12.24Q10.45 12.24 10.23 12.63L9.37 14.12Q9.15 14.50 8.76 14.50L7.24 14.50Q6.85 14.50 6.63 14.12L5.77 12.63Q5.55 12.24 5.11 12.24L3.39 12.24Q2.94 12.24 2.75 11.90L1.99 10.59Q1.80 10.26 2.02 9.87L2.88 8.38Q3.10 8.00 2.88 7.62L2.02 6.13Q1.80 5.74 1.99 5.41L2.75 4.10Q2.94 3.76 3.39 3.76L5.11 3.76Q5.55 3.76 5.77 3.37Z" stroke="#CED0D6" stroke-width="1" stroke-linecap="round" stroke-linejoin="round" /><circle cx="8" cy="8" r="2.05" stroke="#CED0D6" stroke-width="1"/></svg>
<div class="t" style="left:2241.25px;top:584.87px;letter-spacing:0.040px;">buildNeeded</div>
<svg style="left:2204.2px;top:636.0px;" width="32" height="32" viewBox="0 0 16 16" fill="none"><path d="M6.63 1.88Q6.85 1.50 7.24 1.50L8.76 1.50Q9.15 1.50 9.37 1.88L10.23 3.37Q10.45 3.76 10.89 3.76L12.61 3.76Q13.06 3.76 13.25 4.10L14.01 5.41Q14.20 5.74 13.98 6.13L13.12 7.62Q12.90 8.00 13.12 8.38L13.98 9.87Q14.20 10.26 14.01 10.59L13.25 11.90Q13.06 12.24 12.61 12.24L10.89 12.24Q10.45 12.24 10.23 12.63L9.37 14.12Q9.15 14.50 8.76 14.50L7.24 14.50Q6.85 14.50 6.63 14.12L5.77 12.63Q5.55 12.24 5.11 12.24L3.39 12.24Q2.94 12.24 2.75 11.90L1.99 10.59Q1.80 10.26 2.02 9.87L2.88 8.38Q3.10 8.00 2.88 7.62L2.02 6.13Q1.80 5.74 1.99 5.41L2.75 4.10Q2.94 3.76 3.39 3.76L5.11 3.76Q5.55 3.76 5.77 3.37Z" stroke="#CED0D6" stroke-width="1" stroke-linecap="round" stroke-linejoin="round" /><circle cx="8" cy="8" r="2.05" stroke="#CED0D6" stroke-width="1"/></svg>
<div class="t" style="left:2242.00px;top:632.87px;letter-spacing:0.040px;">classes</div>
<svg style="left:2204.2px;top:684.0px;" width="32" height="32" viewBox="0 0 16 16" fill="none"><path d="M6.63 1.88Q6.85 1.50 7.24 1.50L8.76 1.50Q9.15 1.50 9.37 1.88L10.23 3.37Q10.45 3.76 10.89 3.76L12.61 3.76Q13.06 3.76 13.25 4.10L14.01 5.41Q14.20 5.74 13.98 6.13L13.12 7.62Q12.90 8.00 13.12 8.38L13.98 9.87Q14.20 10.26 14.01 10.59L13.25 11.90Q13.06 12.24 12.61 12.24L10.89 12.24Q10.45 12.24 10.23 12.63L9.37 14.12Q9.15 14.50 8.76 14.50L7.24 14.50Q6.85 14.50 6.63 14.12L5.77 12.63Q5.55 12.24 5.11 12.24L3.39 12.24Q2.94 12.24 2.75 11.90L1.99 10.59Q1.80 10.26 2.02 9.87L2.88 8.38Q3.10 8.00 2.88 7.62L2.02 6.13Q1.80 5.74 1.99 5.41L2.75 4.10Q2.94 3.76 3.39 3.76L5.11 3.76Q5.55 3.76 5.77 3.37Z" stroke="#CED0D6" stroke-width="1" stroke-linecap="round" stroke-linejoin="round" /><circle cx="8" cy="8" r="2.05" stroke="#CED0D6" stroke-width="1"/></svg>
<div class="t" style="left:2242.00px;top:680.87px;letter-spacing:0.040px;">clean</div>
<svg style="left:2204.2px;top:732.0px;" width="32" height="32" viewBox="0 0 16 16" fill="none"><path d="M6.63 1.88Q6.85 1.50 7.24 1.50L8.76 1.50Q9.15 1.50 9.37 1.88L10.23 3.37Q10.45 3.76 10.89 3.76L12.61 3.76Q13.06 3.76 13.25 4.10L14.01 5.41Q14.20 5.74 13.98 6.13L13.12 7.62Q12.90 8.00 13.12 8.38L13.98 9.87Q14.20 10.26 14.01 10.59L13.25 11.90Q13.06 12.24 12.61 12.24L10.89 12.24Q10.45 12.24 10.23 12.63L9.37 14.12Q9.15 14.50 8.76 14.50L7.24 14.50Q6.85 14.50 6.63 14.12L5.77 12.63Q5.55 12.24 5.11 12.24L3.39 12.24Q2.94 12.24 2.75 11.90L1.99 10.59Q1.80 10.26 2.02 9.87L2.88 8.38Q3.10 8.00 2.88 7.62L2.02 6.13Q1.80 5.74 1.99 5.41L2.75 4.10Q2.94 3.76 3.39 3.76L5.11 3.76Q5.55 3.76 5.77 3.37Z" stroke="#CED0D6" stroke-width="1" stroke-linecap="round" stroke-linejoin="round" /><circle cx="8" cy="8" r="2.05" stroke="#CED0D6" stroke-width="1"/></svg>
<div class="t" style="left:2243.75px;top:728.87px;letter-spacing:0.040px;">jar</div>
<svg style="left:2204.2px;top:780.0px;" width="32" height="32" viewBox="0 0 16 16" fill="none"><path d="M6.63 1.88Q6.85 1.50 7.24 1.50L8.76 1.50Q9.15 1.50 9.37 1.88L10.23 3.37Q10.45 3.76 10.89 3.76L12.61 3.76Q13.06 3.76 13.25 4.10L14.01 5.41Q14.20 5.74 13.98 6.13L13.12 7.62Q12.90 8.00 13.12 8.38L13.98 9.87Q14.20 10.26 14.01 10.59L13.25 11.90Q13.06 12.24 12.61 12.24L10.89 12.24Q10.45 12.24 10.23 12.63L9.37 14.12Q9.15 14.50 8.76 14.50L7.24 14.50Q6.85 14.50 6.63 14.12L5.77 12.63Q5.55 12.24 5.11 12.24L3.39 12.24Q2.94 12.24 2.75 11.90L1.99 10.59Q1.80 10.26 2.02 9.87L2.88 8.38Q3.10 8.00 2.88 7.62L2.02 6.13Q1.80 5.74 1.99 5.41L2.75 4.10Q2.94 3.76 3.39 3.76L5.11 3.76Q5.55 3.76 5.77 3.37Z" stroke="#CED0D6" stroke-width="1" stroke-linecap="round" stroke-linejoin="round" /><circle cx="8" cy="8" r="2.05" stroke="#CED0D6" stroke-width="1"/></svg>
<div class="t" style="left:2242.75px;top:776.87px;letter-spacing:0.040px;">testClasses</div>
<svg style="left:2130px;top:834.3px" width="20" height="20" viewBox="0 0 20 20" fill="none"><path d="M6.5 2.9L13.5 10L6.5 17.1" stroke="#C6C9CF" stroke-width="1.9" stroke-linecap="round" stroke-linejoin="round"/></svg>
<svg style="left:2166.0px;top:828.0px;" width="32" height="32" viewBox="0 0 16 16" fill="none"><path d="M2.9 2.6H6.1L7.8 4.5H13A1.4 1.4 0 0 1 14.4 5.9V11.8A1.4 1.4 0 0 1 13 13.2H2.9A1.4 1.4 0 0 1 1.5 11.8V4A1.4 1.4 0 0 1 2.9 2.6Z" fill="#43454A" stroke="#CED0D6" stroke-width="1"/><circle cx="12.1" cy="12.05" r="5.1" fill="#2B2D30"/><path d="M11.31 8.73Q11.41 8.52 11.65 8.52L12.55 8.52Q12.79 8.52 12.89 8.73L13.30 9.58Q13.40 9.80 13.64 9.78L14.58 9.71Q14.82 9.69 14.93 9.89L15.39 10.68Q15.50 10.88 15.37 11.08L14.84 11.85Q14.70 12.05 14.84 12.25L15.37 13.02Q15.50 13.22 15.39 13.42L14.93 14.21Q14.82 14.41 14.58 14.39L13.64 14.32Q13.40 14.30 13.30 14.52L12.89 15.37Q12.79 15.58 12.55 15.58L11.65 15.58Q11.41 15.58 11.31 15.37L10.90 14.52Q10.80 14.30 10.56 14.32L9.62 14.39Q9.38 14.41 9.27 14.21L8.81 13.42Q8.70 13.22 8.83 13.02L9.36 12.25Q9.50 12.05 9.36 11.85L8.83 11.08Q8.70 10.88 8.81 10.68L9.27 9.89Q9.38 9.69 9.62 9.71L10.56 9.78Q10.80 9.80 10.90 9.58Z" stroke="#548AF7" stroke-width="0.9" stroke-linecap="round" stroke-linejoin="round" fill="#25324D"/><circle cx="12.1" cy="12.05" r="0.95" fill="#548AF7"/></svg>
<div class="t" style="left:2203.25px;top:824.87px;letter-spacing:0.040px;">build setup</div>
<svg style="left:2130px;top:882.3px" width="20" height="20" viewBox="0 0 20 20" fill="none"><path d="M6.5 2.9L13.5 10L6.5 17.1" stroke="#C6C9CF" stroke-width="1.9" stroke-linecap="round" stroke-linejoin="round"/></svg>
<svg style="left:2166.0px;top:876.0px;" width="32" height="32" viewBox="0 0 16 16" fill="none"><path d="M2.9 2.6H6.1L7.8 4.5H13A1.4 1.4 0 0 1 14.4 5.9V11.8A1.4 1.4 0 0 1 13 13.2H2.9A1.4 1.4 0 0 1 1.5 11.8V4A1.4 1.4 0 0 1 2.9 2.6Z" fill="#43454A" stroke="#CED0D6" stroke-width="1"/><circle cx="12.1" cy="12.05" r="5.1" fill="#2B2D30"/><path d="M11.31 8.73Q11.41 8.52 11.65 8.52L12.55 8.52Q12.79 8.52 12.89 8.73L13.30 9.58Q13.40 9.80 13.64 9.78L14.58 9.71Q14.82 9.69 14.93 9.89L15.39 10.68Q15.50 10.88 15.37 11.08L14.84 11.85Q14.70 12.05 14.84 12.25L15.37 13.02Q15.50 13.22 15.39 13.42L14.93 14.21Q14.82 14.41 14.58 14.39L13.64 14.32Q13.40 14.30 13.30 14.52L12.89 15.37Q12.79 15.58 12.55 15.58L11.65 15.58Q11.41 15.58 11.31 15.37L10.90 14.52Q10.80 14.30 10.56 14.32L9.62 14.39Q9.38 14.41 9.27 14.21L8.81 13.42Q8.70 13.22 8.83 13.02L9.36 12.25Q9.50 12.05 9.36 11.85L8.83 11.08Q8.70 10.88 8.81 10.68L9.27 9.89Q9.38 9.69 9.62 9.71L10.56 9.78Q10.80 9.80 10.90 9.58Z" stroke="#548AF7" stroke-width="0.9" stroke-linecap="round" stroke-linejoin="round" fill="#25324D"/><circle cx="12.1" cy="12.05" r="0.95" fill="#548AF7"/></svg>
<div class="t" style="left:2204.00px;top:872.87px;letter-spacing:0.040px;">distribution</div>
<svg style="left:2130px;top:930.3px" width="20" height="20" viewBox="0 0 20 20" fill="none"><path d="M6.5 2.9L13.5 10L6.5 17.1" stroke="#C6C9CF" stroke-width="1.9" stroke-linecap="round" stroke-linejoin="round"/></svg>
<svg style="left:2166.0px;top:924.0px;" width="32" height="32" viewBox="0 0 16 16" fill="none"><path d="M2.9 2.6H6.1L7.8 4.5H13A1.4 1.4 0 0 1 14.4 5.9V11.8A1.4 1.4 0 0 1 13 13.2H2.9A1.4 1.4 0 0 1 1.5 11.8V4A1.4 1.4 0 0 1 2.9 2.6Z" fill="#43454A" stroke="#CED0D6" stroke-width="1"/><circle cx="12.1" cy="12.05" r="5.1" fill="#2B2D30"/><path d="M11.31 8.73Q11.41 8.52 11.65 8.52L12.55 8.52Q12.79 8.52 12.89 8.73L13.30 9.58Q13.40 9.80 13.64 9.78L14.58 9.71Q14.82 9.69 14.93 9.89L15.39 10.68Q15.50 10.88 15.37 11.08L14.84 11.85Q14.70 12.05 14.84 12.25L15.37 13.02Q15.50 13.22 15.39 13.42L14.93 14.21Q14.82 14.41 14.58 14.39L13.64 14.32Q13.40 14.30 13.30 14.52L12.89 15.37Q12.79 15.58 12.55 15.58L11.65 15.58Q11.41 15.58 11.31 15.37L10.90 14.52Q10.80 14.30 10.56 14.32L9.62 14.39Q9.38 14.41 9.27 14.21L8.81 13.42Q8.70 13.22 8.83 13.02L9.36 12.25Q9.50 12.05 9.36 11.85L8.83 11.08Q8.70 10.88 8.81 10.68L9.27 9.89Q9.38 9.69 9.62 9.71L10.56 9.78Q10.80 9.80 10.90 9.58Z" stroke="#548AF7" stroke-width="0.9" stroke-linecap="round" stroke-linejoin="round" fill="#25324D"/><circle cx="12.1" cy="12.05" r="0.95" fill="#548AF7"/></svg>
<div class="t" style="left:2204.00px;top:920.87px;letter-spacing:0.040px;">documentation</div>
<svg style="left:2130px;top:978.3px" width="20" height="20" viewBox="0 0 20 20" fill="none"><path d="M6.5 2.9L13.5 10L6.5 17.1" stroke="#C6C9CF" stroke-width="1.9" stroke-linecap="round" stroke-linejoin="round"/></svg>
<svg style="left:2166.0px;top:972.0px;" width="32" height="32" viewBox="0 0 16 16" fill="none"><path d="M2.9 2.6H6.1L7.8 4.5H13A1.4 1.4 0 0 1 14.4 5.9V11.8A1.4 1.4 0 0 1 13 13.2H2.9A1.4 1.4 0 0 1 1.5 11.8V4A1.4 1.4 0 0 1 2.9 2.6Z" fill="#43454A" stroke="#CED0D6" stroke-width="1"/><circle cx="12.1" cy="12.05" r="5.1" fill="#2B2D30"/><path d="M11.31 8.73Q11.41 8.52 11.65 8.52L12.55 8.52Q12.79 8.52 12.89 8.73L13.30 9.58Q13.40 9.80 13.64 9.78L14.58 9.71Q14.82 9.69 14.93 9.89L15.39 10.68Q15.50 10.88 15.37 11.08L14.84 11.85Q14.70 12.05 14.84 12.25L15.37 13.02Q15.50 13.22 15.39 13.42L14.93 14.21Q14.82 14.41 14.58 14.39L13.64 14.32Q13.40 14.30 13.30 14.52L12.89 15.37Q12.79 15.58 12.55 15.58L11.65 15.58Q11.41 15.58 11.31 15.37L10.90 14.52Q10.80 14.30 10.56 14.32L9.62 14.39Q9.38 14.41 9.27 14.21L8.81 13.42Q8.70 13.22 8.83 13.02L9.36 12.25Q9.50 12.05 9.36 11.85L8.83 11.08Q8.70 10.88 8.81 10.68L9.27 9.89Q9.38 9.69 9.62 9.71L10.56 9.78Q10.80 9.80 10.90 9.58Z" stroke="#548AF7" stroke-width="0.9" stroke-linecap="round" stroke-linejoin="round" fill="#25324D"/><circle cx="12.1" cy="12.05" r="0.95" fill="#548AF7"/></svg>
<div class="t" style="left:2203.25px;top:968.87px;letter-spacing:0.040px;">help</div>
<svg style="left:2130px;top:1026.3px" width="20" height="20" viewBox="0 0 20 20" fill="none"><path d="M6.5 2.9L13.5 10L6.5 17.1" stroke="#C6C9CF" stroke-width="1.9" stroke-linecap="round" stroke-linejoin="round"/></svg>
<svg style="left:2166.0px;top:1020.0px;" width="32" height="32" viewBox="0 0 16 16" fill="none"><path d="M2.9 2.6H6.1L7.8 4.5H13A1.4 1.4 0 0 1 14.4 5.9V11.8A1.4 1.4 0 0 1 13 13.2H2.9A1.4 1.4 0 0 1 1.5 11.8V4A1.4 1.4 0 0 1 2.9 2.6Z" fill="#43454A" stroke="#CED0D6" stroke-width="1"/><circle cx="12.1" cy="12.05" r="5.1" fill="#2B2D30"/><path d="M11.31 8.73Q11.41 8.52 11.65 8.52L12.55 8.52Q12.79 8.52 12.89 8.73L13.30 9.58Q13.40 9.80 13.64 9.78L14.58 9.71Q14.82 9.69 14.93 9.89L15.39 10.68Q15.50 10.88 15.37 11.08L14.84 11.85Q14.70 12.05 14.84 12.25L15.37 13.02Q15.50 13.22 15.39 13.42L14.93 14.21Q14.82 14.41 14.58 14.39L13.64 14.32Q13.40 14.30 13.30 14.52L12.89 15.37Q12.79 15.58 12.55 15.58L11.65 15.58Q11.41 15.58 11.31 15.37L10.90 14.52Q10.80 14.30 10.56 14.32L9.62 14.39Q9.38 14.41 9.27 14.21L8.81 13.42Q8.70 13.22 8.83 13.02L9.36 12.25Q9.50 12.05 9.36 11.85L8.83 11.08Q8.70 10.88 8.81 10.68L9.27 9.89Q9.38 9.69 9.62 9.71L10.56 9.78Q10.80 9.80 10.90 9.58Z" stroke="#548AF7" stroke-width="0.9" stroke-linecap="round" stroke-linejoin="round" fill="#25324D"/><circle cx="12.1" cy="12.05" r="0.95" fill="#548AF7"/></svg>
<div class="t" style="left:2204.00px;top:1016.87px;letter-spacing:0.040px;">other</div>
<svg style="left:2130px;top:1074.3px" width="20" height="20" viewBox="0 0 20 20" fill="none"><path d="M6.5 2.9L13.5 10L6.5 17.1" stroke="#C6C9CF" stroke-width="1.9" stroke-linecap="round" stroke-linejoin="round"/></svg>
<svg style="left:2166.0px;top:1068.0px;" width="32" height="32" viewBox="0 0 16 16" fill="none"><path d="M2.9 2.6H6.1L7.8 4.5H13A1.4 1.4 0 0 1 14.4 5.9V11.8A1.4 1.4 0 0 1 13 13.2H2.9A1.4 1.4 0 0 1 1.5 11.8V4A1.4 1.4 0 0 1 2.9 2.6Z" fill="#43454A" stroke="#CED0D6" stroke-width="1"/><circle cx="12.1" cy="12.05" r="5.1" fill="#2B2D30"/><path d="M11.31 8.73Q11.41 8.52 11.65 8.52L12.55 8.52Q12.79 8.52 12.89 8.73L13.30 9.58Q13.40 9.80 13.64 9.78L14.58 9.71Q14.82 9.69 14.93 9.89L15.39 10.68Q15.50 10.88 15.37 11.08L14.84 11.85Q14.70 12.05 14.84 12.25L15.37 13.02Q15.50 13.22 15.39 13.42L14.93 14.21Q14.82 14.41 14.58 14.39L13.64 14.32Q13.40 14.30 13.30 14.52L12.89 15.37Q12.79 15.58 12.55 15.58L11.65 15.58Q11.41 15.58 11.31 15.37L10.90 14.52Q10.80 14.30 10.56 14.32L9.62 14.39Q9.38 14.41 9.27 14.21L8.81 13.42Q8.70 13.22 8.83 13.02L9.36 12.25Q9.50 12.05 9.36 11.85L8.83 11.08Q8.70 10.88 8.81 10.68L9.27 9.89Q9.38 9.69 9.62 9.71L10.56 9.78Q10.80 9.80 10.90 9.58Z" stroke="#548AF7" stroke-width="0.9" stroke-linecap="round" stroke-linejoin="round" fill="#25324D"/><circle cx="12.1" cy="12.05" r="0.95" fill="#548AF7"/></svg>
<div class="t" style="left:2205.00px;top:1064.87px;letter-spacing:0.040px;">verification</div>
<svg style="left:2092px;top:1122.3px" width="20" height="20" viewBox="0 0 20 20" fill="none"><path d="M6.5 2.9L13.5 10L6.5 17.1" stroke="#C6C9CF" stroke-width="1.9" stroke-linecap="round" stroke-linejoin="round"/></svg>
<svg style="left:2128.0px;top:1116.0px;" width="32" height="32" viewBox="0 0 16 16" fill="none"><path d="M2.9 2.6H6.1L7.8 4.5H13A1.4 1.4 0 0 1 14.4 5.9V11.8A1.4 1.4 0 0 1 13 13.2H2.9A1.4 1.4 0 0 1 1.5 11.8V4A1.4 1.4 0 0 1 2.9 2.6Z" fill="#43454A" stroke="#CED0D6" stroke-width="1"/><circle cx="12.1" cy="12.05" r="5.1" fill="#2B2D30"/><path d="M11.31 8.73Q11.41 8.52 11.65 8.52L12.55 8.52Q12.79 8.52 12.89 8.73L13.30 9.58Q13.40 9.80 13.64 9.78L14.58 9.71Q14.82 9.69 14.93 9.89L15.39 10.68Q15.50 10.88 15.37 11.08L14.84 11.85Q14.70 12.05 14.84 12.25L15.37 13.02Q15.50 13.22 15.39 13.42L14.93 14.21Q14.82 14.41 14.58 14.39L13.64 14.32Q13.40 14.30 13.30 14.52L12.89 15.37Q12.79 15.58 12.55 15.58L11.65 15.58Q11.41 15.58 11.31 15.37L10.90 14.52Q10.80 14.30 10.56 14.32L9.62 14.39Q9.38 14.41 9.27 14.21L8.81 13.42Q8.70 13.22 8.83 13.02L9.36 12.25Q9.50 12.05 9.36 11.85L8.83 11.08Q8.70 10.88 8.81 10.68L9.27 9.89Q9.38 9.69 9.62 9.71L10.56 9.78Q10.80 9.80 10.90 9.58Z" stroke="#548AF7" stroke-width="0.9" stroke-linecap="round" stroke-linejoin="round" fill="#25324D"/><circle cx="12.1" cy="12.05" r="0.95" fill="#548AF7"/></svg>
<div class="t" style="left:2164.75px;top:1112.87px;letter-spacing:0.040px;">Run Configurations</div>
<svg style="left:2092px;top:1170.3px" width="20" height="20" viewBox="0 0 20 20" fill="none"><path d="M6.5 2.9L13.5 10L6.5 17.1" stroke="#C6C9CF" stroke-width="1.9" stroke-linecap="round" stroke-linejoin="round"/></svg>
<svg style="left:2128.7px;top:1164.3px;" width="30.6" height="30.6" viewBox="0 0 20 20" fill="none"><path d="M14.9 4.3C15.1 3.5 16 3 16.9 3C18.2 3 19.1 4 19.1 5.5C19.1 8 17.9 9.6 16.2 11.2C14.8 12.5 14 14 14 16.7H12.1C12 15.5 11.2 14.7 10.15 14.7C9.1 14.7 8.3 15.5 8.2 16.7H6.3C6.2 15.5 5.4 14.7 4.35 14.7C3.3 14.7 2.7 15.5 2.65 16.7H0.75V14C0.75 11.6 1.9 9.4 3.7 7.9" stroke="#D6D8DD" stroke-width="1.4" stroke-linecap="round" stroke-linejoin="round" /><path d="M3.9 6.9C5 5.8 6.6 5.2 8.3 5.2C10.5 5.2 12.4 6.3 14.3 7.2C15.6 7.8 17 8 18.1 7" stroke="#D6D8DD" stroke-width="1.4" stroke-linecap="round" stroke-linejoin="round" /><path d="M3.9 6.9C3.9 8.2 4.1 9.6 4.6 10.5C5 11.3 5.7 11.7 6.5 11.5C7.6 11.2 8.7 10.3 9.7 9.4" stroke="#D6D8DD" stroke-width="1.4" stroke-linecap="round" stroke-linejoin="round" /><circle cx="12.45" cy="9.2" r="0.75" fill="#D6D8DD"/></svg>
<div class="t" style="left:2166.00px;top:1160.87px;letter-spacing:0.040px;">com.mechanitis.demo.sense.client</div>
<svg style="left:2092px;top:1218.3px" width="20" height="20" viewBox="0 0 20 20" fill="none"><path d="M6.5 2.9L13.5 10L6.5 17.1" stroke="#C6C9CF" stroke-width="1.9" stroke-linecap="round" stroke-linejoin="round"/></svg>
<svg style="left:2128.7px;top:1212.3px;" width="30.6" height="30.6" viewBox="0 0 20 20" fill="none"><path d="M14.9 4.3C15.1 3.5 16 3 16.9 3C18.2 3 19.1 4 19.1 5.5C19.1 8 17.9 9.6 16.2 11.2C14.8 12.5 14 14 14 16.7H12.1C12 15.5 11.2 14.7 10.15 14.7C9.1 14.7 8.3 15.5 8.2 16.7H6.3C6.2 15.5 5.4 14.7 4.35 14.7C3.3 14.7 2.7 15.5 2.65 16.7H0.75V14C0.75 11.6 1.9 9.4 3.7 7.9" stroke="#D6D8DD" stroke-width="1.4" stroke-linecap="round" stroke-linejoin="round" /><path d="M3.9 6.9C5 5.8 6.6 5.2 8.3 5.2C10.5 5.2 12.4 6.3 14.3 7.2C15.6 7.8 17 8 18.1 7" stroke="#D6D8DD" stroke-width="1.4" stroke-linecap="round" stroke-linejoin="round" /><path d="M3.9 6.9C3.9 8.2 4.1 9.6 4.6 10.5C5 11.3 5.7 11.7 6.5 11.5C7.6 11.2 8.7 10.3 9.7 9.4" stroke="#D6D8DD" stroke-width="1.4" stroke-linecap="round" stroke-linejoin="round" /><circle cx="12.45" cy="9.2" r="0.75" fill="#D6D8DD"/></svg>
<div class="t" style="left:2166.00px;top:1208.87px;letter-spacing:0.040px;">com.mechanitis.demo.sense.flow</div>
<svg style="left:2092px;top:1266.3px" width="20" height="20" viewBox="0 0 20 20" fill="none"><path d="M6.5 2.9L13.5 10L6.5 17.1" stroke="#C6C9CF" stroke-width="1.9" stroke-linecap="round" stroke-linejoin="round"/></svg>
<svg style="left:2128.7px;top:1260.3px;" width="30.6" height="30.6" viewBox="0 0 20 20" fill="none"><path d="M14.9 4.3C15.1 3.5 16 3 16.9 3C18.2 3 19.1 4 19.1 5.5C19.1 8 17.9 9.6 16.2 11.2C14.8 12.5 14 14 14 16.7H12.1C12 15.5 11.2 14.7 10.15 14.7C9.1 14.7 8.3 15.5 8.2 16.7H6.3C6.2 15.5 5.4 14.7 4.35 14.7C3.3 14.7 2.7 15.5 2.65 16.7H0.75V14C0.75 11.6 1.9 9.4 3.7 7.9" stroke="#D6D8DD" stroke-width="1.4" stroke-linecap="round" stroke-linejoin="round" /><path d="M3.9 6.9C5 5.8 6.6 5.2 8.3 5.2C10.5 5.2 12.4 6.3 14.3 7.2C15.6 7.8 17 8 18.1 7" stroke="#D6D8DD" stroke-width="1.4" stroke-linecap="round" stroke-linejoin="round" /><path d="M3.9 6.9C3.9 8.2 4.1 9.6 4.6 10.5C5 11.3 5.7 11.7 6.5 11.5C7.6 11.2 8.7 10.3 9.7 9.4" stroke="#D6D8DD" stroke-width="1.4" stroke-linecap="round" stroke-linejoin="round" /><circle cx="12.45" cy="9.2" r="0.75" fill="#D6D8DD"/></svg>
<div class="t" style="left:2166.00px;top:1256.87px;letter-spacing:0.040px;">com.mechanitis.demo.sense.mood</div>
<svg style="left:2092px;top:1314.3px" width="20" height="20" viewBox="0 0 20 20" fill="none"><path d="M6.5 2.9L13.5 10L6.5 17.1" stroke="#C6C9CF" stroke-width="1.9" stroke-linecap="round" stroke-linejoin="round"/></svg>
<svg style="left:2128.7px;top:1308.3px;" width="30.6" height="30.6" viewBox="0 0 20 20" fill="none"><path d="M14.9 4.3C15.1 3.5 16 3 16.9 3C18.2 3 19.1 4 19.1 5.5C19.1 8 17.9 9.6 16.2 11.2C14.8 12.5 14 14 14 16.7H12.1C12 15.5 11.2 14.7 10.15 14.7C9.1 14.7 8.3 15.5 8.2 16.7H6.3C6.2 15.5 5.4 14.7 4.35 14.7C3.3 14.7 2.7 15.5 2.65 16.7H0.75V14C0.75 11.6 1.9 9.4 3.7 7.9" stroke="#D6D8DD" stroke-width="1.4" stroke-linecap="round" stroke-linejoin="round" /><path d="M3.9 6.9C5 5.8 6.6 5.2 8.3 5.2C10.5 5.2 12.4 6.3 14.3 7.2C15.6 7.8 17 8 18.1 7" stroke="#D6D8DD" stroke-width="1.4" stroke-linecap="round" stroke-linejoin="round" /><path d="M3.9 6.9C3.9 8.2 4.1 9.6 4.6 10.5C5 11.3 5.7 11.7 6.5 11.5C7.6 11.2 8.7 10.3 9.7 9.4" stroke="#D6D8DD" stroke-width="1.4" stroke-linecap="round" stroke-linejoin="round" /><circle cx="12.45" cy="9.2" r="0.75" fill="#D6D8DD"/></svg>
<div class="t" style="left:2166.00px;top:1304.87px;letter-spacing:0.040px;">com.mechanitis.demo.sense.service</div>
<svg style="left:2092px;top:1362.3px" width="20" height="20" viewBox="0 0 20 20" fill="none"><path d="M6.5 2.9L13.5 10L6.5 17.1" stroke="#C6C9CF" stroke-width="1.9" stroke-linecap="round" stroke-linejoin="round"/></svg>
<svg style="left:2128.7px;top:1356.3px;" width="30.6" height="30.6" viewBox="0 0 20 20" fill="none"><path d="M14.9 4.3C15.1 3.5 16 3 16.9 3C18.2 3 19.1 4 19.1 5.5C19.1 8 17.9 9.6 16.2 11.2C14.8 12.5 14 14 14 16.7H12.1C12 15.5 11.2 14.7 10.15 14.7C9.1 14.7 8.3 15.5 8.2 16.7H6.3C6.2 15.5 5.4 14.7 4.35 14.7C3.3 14.7 2.7 15.5 2.65 16.7H0.75V14C0.75 11.6 1.9 9.4 3.7 7.9" stroke="#D6D8DD" stroke-width="1.4" stroke-linecap="round" stroke-linejoin="round" /><path d="M3.9 6.9C5 5.8 6.6 5.2 8.3 5.2C10.5 5.2 12.4 6.3 14.3 7.2C15.6 7.8 17 8 18.1 7" stroke="#D6D8DD" stroke-width="1.4" stroke-linecap="round" stroke-linejoin="round" /><path d="M3.9 6.9C3.9 8.2 4.1 9.6 4.6 10.5C5 11.3 5.7 11.7 6.5 11.5C7.6 11.2 8.7 10.3 9.7 9.4" stroke="#D6D8DD" stroke-width="1.4" stroke-linecap="round" stroke-linejoin="round" /><circle cx="12.45" cy="9.2" r="0.75" fill="#D6D8DD"/></svg>
<div class="t" style="left:2166.00px;top:1352.87px;letter-spacing:0.040px;">com.mechanitis.demo.sense.service.test</div>
<svg style="left:2092px;top:1410.3px" width="20" height="20" viewBox="0 0 20 20" fill="none"><path d="M6.5 2.9L13.5 10L6.5 17.1" stroke="#C6C9CF" stroke-width="1.9" stroke-linecap="round" stroke-linejoin="round"/></svg>
<svg style="left:2128.7px;top:1404.3px;" width="30.6" height="30.6" viewBox="0 0 20 20" fill="none"><path d="M14.9 4.3C15.1 3.5 16 3 16.9 3C18.2 3 19.1 4 19.1 5.5C19.1 8 17.9 9.6 16.2 11.2C14.8 12.5 14 14 14 16.7H12.1C12 15.5 11.2 14.7 10.15 14.7C9.1 14.7 8.3 15.5 8.2 16.7H6.3C6.2 15.5 5.4 14.7 4.35 14.7C3.3 14.7 2.7 15.5 2.65 16.7H0.75V14C0.75 11.6 1.9 9.4 3.7 7.9" stroke="#D6D8DD" stroke-width="1.4" stroke-linecap="round" stroke-linejoin="round" /><path d="M3.9 6.9C5 5.8 6.6 5.2 8.3 5.2C10.5 5.2 12.4 6.3 14.3 7.2C15.6 7.8 17 8 18.1 7" stroke="#D6D8DD" stroke-width="1.4" stroke-linecap="round" stroke-linejoin="round" /><path d="M3.9 6.9C3.9 8.2 4.1 9.6 4.6 10.5C5 11.3 5.7 11.7 6.5 11.5C7.6 11.2 8.7 10.3 9.7 9.4" stroke="#D6D8DD" stroke-width="1.4" stroke-linecap="round" stroke-linejoin="round" /><circle cx="12.45" cy="9.2" r="0.75" fill="#D6D8DD"/></svg>
<div class="t" style="left:2166.00px;top:1400.87px;letter-spacing:0.040px;">com.mechanitis.demo.sense.twitter</div>
<svg style="left:2092px;top:1458.3px" width="20" height="20" viewBox="0 0 20 20" fill="none"><path d="M6.5 2.9L13.5 10L6.5 17.1" stroke="#C6C9CF" stroke-width="1.9" stroke-linecap="round" stroke-linejoin="round"/></svg>
<svg style="left:2128.7px;top:1452.3px;" width="30.6" height="30.6" viewBox="0 0 20 20" fill="none"><path d="M14.9 4.3C15.1 3.5 16 3 16.9 3C18.2 3 19.1 4 19.1 5.5C19.1 8 17.9 9.6 16.2 11.2C14.8 12.5 14 14 14 16.7H12.1C12 15.5 11.2 14.7 10.15 14.7C9.1 14.7 8.3 15.5 8.2 16.7H6.3C6.2 15.5 5.4 14.7 4.35 14.7C3.3 14.7 2.7 15.5 2.65 16.7H0.75V14C0.75 11.6 1.9 9.4 3.7 7.9" stroke="#D6D8DD" stroke-width="1.4" stroke-linecap="round" stroke-linejoin="round" /><path d="M3.9 6.9C5 5.8 6.6 5.2 8.3 5.2C10.5 5.2 12.4 6.3 14.3 7.2C15.6 7.8 17 8 18.1 7" stroke="#D6D8DD" stroke-width="1.4" stroke-linecap="round" stroke-linejoin="round" /><path d="M3.9 6.9C3.9 8.2 4.1 9.6 4.6 10.5C5 11.3 5.7 11.7 6.5 11.5C7.6 11.2 8.7 10.3 9.7 9.4" stroke="#D6D8DD" stroke-width="1.4" stroke-linecap="round" stroke-linejoin="round" /><circle cx="12.45" cy="9.2" r="0.75" fill="#D6D8DD"/></svg>
<div class="t" style="left:2166.00px;top:1448.87px;letter-spacing:0.040px;">com.mechanitis.demo.sense.user</div>
<div class="a" style="left:2684px;top:224px;width:348px;height:128px;border-radius:16px;background:#2B2D30;border:2px solid #43454A;box-shadow:0 8px 24px rgba(0,0,0,.45),0 0 0 1px rgba(0,0,0,.35)"></div>
<div class="a" style="left:2700px;top:288px;width:316px;height:48px;background:#2E436E;border-radius:8px"></div>
<div class="t" style="left:2716.20px;top:244.67px;letter-spacing:0.123px;">Auto-Reload Settings...</div>
<div class="t" style="left:2715.25px;top:292.57px;letter-spacing:0.074px;">Gradle Settings...</div>
<div class="a" style="left:28px;top:2122px;width:16px;height:16px;border:2px solid #5A9BFA;border-radius:4.5px;background:#25324D"></div>
<div class="t" style="left:52.25px;top:2109.07px;letter-spacing:0.217px;color:#A3A6AF">sense-nine</div>
<svg style="left:203.5px;top:2118.3px" width="20" height="20" viewBox="0 0 20 20" fill="none"><path d="M6.5 2.9L13.5 10L6.5 17.1" stroke="#9DA0A8" stroke-width="2" stroke-linecap="round" stroke-linejoin="round"/></svg>
<div class="a" style="left:238px;top:2122px;width:16px;height:16px;border:2px solid #5A9BFA;border-radius:4.5px;background:#25324D"></div>
<div class="t" style="left:261.40px;top:2109.07px;letter-spacing:0.058px;color:#A3A6AF">com.mechanitis.demo.sense.service</div>
<svg style="left:721px;top:2118.3px" width="20" height="20" viewBox="0 0 20 20" fill="none"><path d="M6.5 2.9L13.5 10L6.5 17.1" stroke="#9DA0A8" stroke-width="2" stroke-linecap="round" stroke-linejoin="round"/></svg>
<svg style="left:757.1px;top:2110.3px" width="31" height="31" viewBox="0 0 20 20" fill="none"><path d="M14.9 4.3C15.1 3.5 16 3 16.9 3C18.2 3 19.1 4 19.1 5.5C19.1 8 17.9 9.6 16.2 11.2C14.8 12.5 14 14 14 16.7H12.1C12 15.5 11.2 14.7 10.15 14.7C9.1 14.7 8.3 15.5 8.2 16.7H6.3C6.2 15.5 5.4 14.7 4.35 14.7C3.3 14.7 2.7 15.5 2.65 16.7H0.75V14C0.75 11.6 1.9 9.4 3.7 7.9" stroke="#DFE1E5" stroke-width="1.4" stroke-linecap="round" stroke-linejoin="round" /><path d="M3.9 6.9C5 5.8 6.6 5.2 8.3 5.2C10.5 5.2 12.4 6.3 14.3 7.2C15.6 7.8 17 8 18.1 7" stroke="#DFE1E5" stroke-width="1.4" stroke-linecap="round" stroke-linejoin="round" /><path d="M3.9 6.9C3.9 8.2 4.1 9.6 4.6 10.5C5 11.3 5.7 11.7 6.5 11.5C7.6 11.2 8.7 10.3 9.7 9.4" stroke="#DFE1E5" stroke-width="1.4" stroke-linecap="round" stroke-linejoin="round" /><circle cx="12.45" cy="9.2" r="0.75" fill="#DFE1E5"/></svg>
<div class="a" style="left:772.5px;top:2128.5px;width:18px;height:18px;background:#2B2D30;"></div>
<svg style="left:774.5px;top:2130.5px;overflow:hidden" width="14" height="14" viewBox="0 0 14 14" fill="none"><path d="M1 1H13.4L6.9 7L13.4 13H1Z" fill="#2F2936" stroke="#B57EFB" stroke-width="2" stroke-linejoin="miter"/></svg>
<div class="t" style="left:795.65px;top:2109.07px;letter-spacing:0.297px;color:#A3A6AF">build.gradle.kts</div>
<svg style="left:999.5px;top:2118.3px" width="20" height="20" viewBox="0 0 20 20" fill="none"><path d="M6.5 2.9L13.5 10L6.5 17.1" stroke="#9DA0A8" stroke-width="2" stroke-linecap="round" stroke-linejoin="round"/></svg>
<svg style="left:1035px;top:2112.5px" width="31" height="31" viewBox="0 0 16 16" fill="none"><circle cx="8" cy="8" r="6.9" fill="#45322B" stroke="#C77D55" stroke-width="1"/><path d="M5.4 4.3H6.5C7.1 4.3 7.4 4.6 7.65 5.2L10.3 11.6M7.95 7L5.4 11.6" stroke="#C77D55" stroke-width="1.15" stroke-linecap="round" fill="none"/></svg>
<div class="t" style="left:1074.00px;top:2109.07px;letter-spacing:0.205px;color:#A3A6AF">dependencies</div>
<div class="t" style="left:3257.45px;top:2109.07px;letter-spacing:-1.175px;color:#A3A6AF">6:1</div>
<svg style="left:3325.0px;top:2114.5px;" width="32" height="32" viewBox="0 0 16 16" fill="none"><path d="M13.6 2.5C13.6 2.5 13.9 6 13 9C12.1 12 9.8 14 7 14C4.3 14 2.3 12 2.3 9.3C2.3 6.2 4.9 4 8 3.4C10.2 3 12 2.9 13.6 2.5Z" stroke="#CED0D6" stroke-width="1" stroke-linecap="round" stroke-linejoin="round" /></svg>
<svg style="left:3390.5px;top:2115.0px;" width="31" height="31" viewBox="0 0 20 20" fill="none"><path d="M3.35 3.70C3.67 3.55 4.36 3.03 5.25 2.83C6.14 2.63 7.41 2.40 8.70 2.49C10.00 2.57 11.78 2.80 13.02 3.35C14.26 3.90 15.44 4.79 16.13 5.77C16.82 6.75 17.14 8.16 17.17 9.22C17.20 10.29 16.85 11.41 16.30 12.16C15.76 12.91 14.78 13.38 13.89 13.71C12.99 14.04 11.90 14.20 10.95 14.15C10.00 14.09 8.91 13.79 8.19 13.37C7.47 12.95 6.92 12.16 6.63 11.64C6.34 11.12 6.37 10.69 6.46 10.26C6.55 9.83 6.80 9.34 7.15 9.05C7.50 8.76 8.06 8.49 8.53 8.53C9.01 8.58 9.76 9.18 10.00 9.31" stroke="#CED0D6" stroke-width="1.3" stroke-linecap="round" stroke-linejoin="round" /><path d="M16.65 16.30C16.33 16.45 15.64 16.97 14.75 17.17C13.86 17.37 12.59 17.60 11.30 17.51C10.00 17.43 8.22 17.20 6.98 16.65C5.74 16.10 4.56 15.21 3.87 14.23C3.18 13.25 2.86 11.84 2.83 10.78C2.80 9.71 3.15 8.59 3.70 7.84C4.24 7.09 5.22 6.62 6.11 6.29C7.01 5.96 8.10 5.80 9.05 5.85C10.00 5.91 11.09 6.21 11.81 6.63C12.53 7.05 13.08 7.84 13.37 8.36C13.66 8.88 13.63 9.31 13.54 9.74C13.45 10.17 13.20 10.66 12.85 10.95C12.50 11.24 11.94 11.51 11.47 11.47C10.99 11.42 10.24 10.82 10.00 10.69" stroke="#CED0D6" stroke-width="1.3" stroke-linecap="round" stroke-linejoin="round" /></svg>
<div class="t" style="left:3452.85px;top:2109.07px;letter-spacing:-1.050px;color:#A3A6AF">LF</div>
<div class="t" style="left:3515.50px;top:2109.07px;letter-spacing:0.387px;color:#A3A6AF">UTF-8</div>
<div class="t" style="left:3628.50px;top:2109.07px;letter-spacing:0.171px;color:#A3A6AF">4 spaces</div>
<svg style="left:3775.0px;top:2114.3px;" width="32" height="32" viewBox="0 0 16 16" fill="none"><rect x="2.5" y="7" width="8.6" height="6.8" rx="1.5" stroke="#CED0D6" stroke-width="1"/><path d="M6.8 9.6V11.2" stroke="#CED0D6" stroke-width="1" stroke-linecap="round" stroke-linejoin="round" /><path d="M8.6 7V4.9A2.6 2.6 0 0 1 13.8 4.9V5.6" stroke="#CED0D6" stroke-width="1" stroke-linecap="round" stroke-linejoin="round" /></svg></body></html>
